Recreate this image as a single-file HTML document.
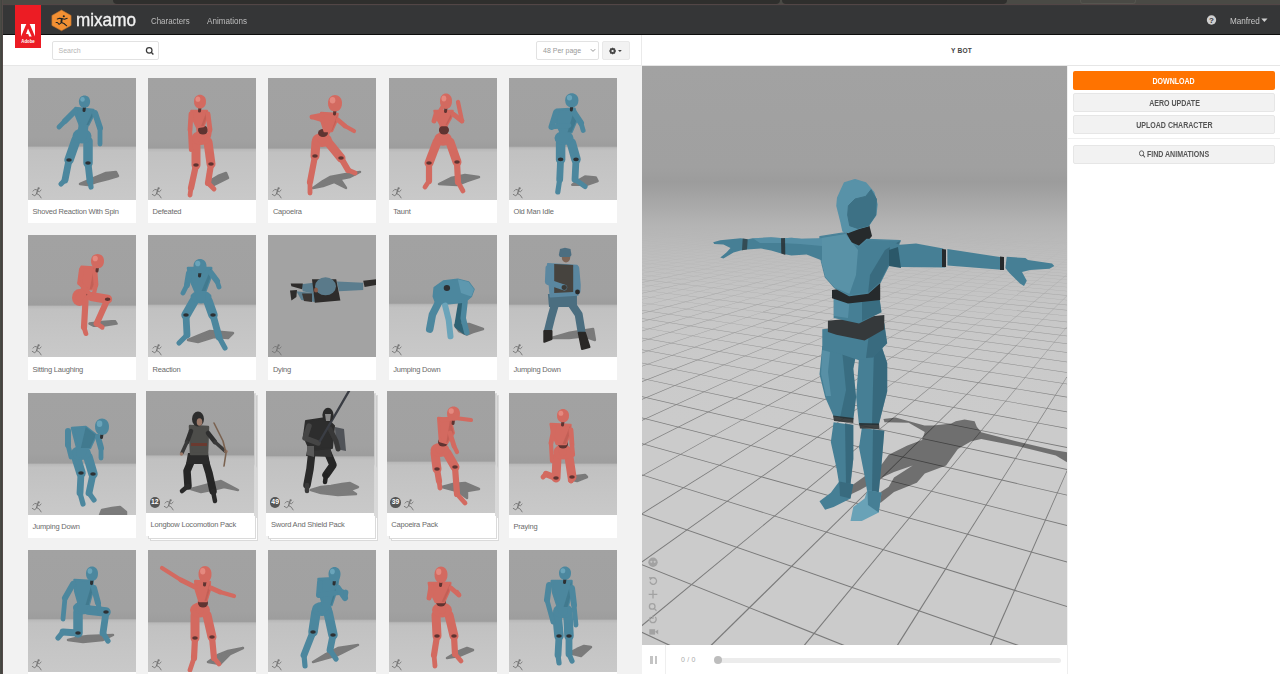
<!DOCTYPE html>
<html><head><meta charset="utf-8">
<style>
*{box-sizing:border-box;margin:0;padding:0}
html,body{width:1280px;height:674px;overflow:hidden;background:#f2f2f2;font-family:"Liberation Sans",sans-serif}
.abs{position:absolute}
#top{left:0;top:0;width:1280px;height:6px;background:linear-gradient(#4a4a45 0,#4a4a45 4px,#524646 4px,#524646 5px,#3a3a3a 5px,#353637 6px)}
#lb{left:0;top:0;width:3px;height:674px;background:linear-gradient(90deg,#4a4a45 0,#4a4a45 1px,#434540 1px,#434540 2px,#534a48 2px,#534a48 3px)}
#nav{left:3px;top:6px;width:1277px;height:29px;background:#353637;border-bottom:1px solid #0d0d0d}
#adobe{left:15px;top:5px;width:26px;height:43px;background:#ec1c24;z-index:5}
#sub{left:3px;top:35px;width:1277px;height:31px;background:#fff;border-bottom:1px solid #e6e6e6}
#grid{left:3px;top:66px;width:639px;height:608px;background:#f2f2f2}
#vdiv{left:641px;top:35px;width:1px;height:31px;background:#eaeaea}
#view{left:642px;top:66px;width:425px;height:579px;background:#c9c9c9;overflow:hidden}
#rp{left:1067px;top:66px;width:213px;height:608px;background:#fff;border-left:1px solid #f0f0f0}
#player{left:642px;top:645px;width:426px;height:29px;background:#fff;border-right:1px solid #eee}
.t{position:absolute;white-space:nowrap;line-height:1}
.card{position:absolute;width:108px;height:145px;background:#fff}
.card .img{position:absolute;left:0;top:0;width:108px;height:122px;background:linear-gradient(#a1a1a1 0,#a1a1a1 64px,#b3b3b3 69px,#c6c6c6 74px,#cbcbcb 122px);overflow:hidden}
.card .cap{position:absolute;left:4.5px;top:9px;font-size:7.5px;letter-spacing:-0.2px;color:#6a6a6a;white-space:nowrap;line-height:1}
.bt{display:inline-block;transform:scaleX(0.86);font-size:8.2px;position:relative;top:0.8px}
.btn{position:absolute;left:1073px;width:202px;height:19px;border-radius:2px;font-size:7px;font-weight:bold;text-align:center;line-height:19px;letter-spacing:0}
</style></head><body>
<div id="top" class="abs"></div>
<div class="abs" style="left:113px;top:0;width:667px;height:4px;background:#2f2f2d;border-radius:0 0 4px 4px"></div>
<div class="abs" style="left:782px;top:0;width:225px;height:4px;background:#2f2f2d;border-radius:0 0 4px 4px"></div>
<div class="abs" style="left:1080px;top:0;width:56px;height:4px;border:1px solid #55554f;border-top:none;border-radius:0 0 3px 3px"></div>
<div id="lb" class="abs"></div>
<div id="nav" class="abs"></div>

<div id="adobe" class="abs"><svg width="26" height="43" viewBox="0 0 26 43" style="position:absolute;left:0;top:0">
<polygon fill="#fff" points="6,19 11.3,19 6,31.5"/>
<polygon fill="#fff" points="14.7,19 20,19 20,31.5"/>
<polygon fill="#fff" points="13,23.4 16.7,31.5 14.2,31.5 13.2,29 11,29"/>
<text x="13" y="42.6" font-family="Liberation Sans" font-size="5" font-weight="bold" fill="#fff" text-anchor="middle" transform="scale(1,0.9)" textLength="13.5" lengthAdjust="spacingAndGlyphs">Adobe</text>
</svg></div>
<svg class="abs" style="left:50px;top:8px" width="24" height="26" viewBox="50 8 24 26">
<polygon points="61.5,10.1 71.1,15.5 71.1,25.4 61.5,30.8 51.9,25.4 51.9,15.5" fill="#f39033" stroke="#b86e2c" stroke-width="0.6"/>
<circle cx="63.8" cy="16.2" r="1.05" fill="#1e2325"/>
<path d="M57.3,19 L59.5,18.3 L61.7,18.4 L64.5,19.2 L67.2,18.3 M61.7,18.4 L61.4,22.6 M56.1,22.5 L57.4,22.5 L59.1,24.3 L61.4,22.6 L64,23.5 L66.7,25.8" stroke="#1e2325" stroke-width="1.05" fill="none" stroke-linecap="round" stroke-linejoin="round"/>
<path d="M61.7,18.4 L61.4,22.6" stroke="#1e2325" stroke-width="1.8"/>
</svg>
<div class="t" style="left:75.5px;top:10.6px;font-size:18.5px;font-weight:normal;color:#f2f2f2;transform:scaleX(0.925);-webkit-text-stroke:0.35px #f2f2f2;transform-origin:0 0">mixamo</div>
<div class="t" style="left:151px;top:16.6px;font-size:9.2px;color:#bdbdbd;transform:scaleX(0.86);transform-origin:0 0">Characters</div>
<div class="t" style="left:207px;top:16.6px;font-size:9.2px;color:#bdbdbd;transform:scaleX(0.88);transform-origin:0 0">Animations</div>
<svg class="abs" style="left:1206px;top:15px" width="11" height="11" viewBox="0 0 11 11"><circle cx="5.5" cy="5" r="4.7" fill="#cfcfcf"/><text x="5.5" y="7.9" font-family="Liberation Sans" font-weight="bold" font-size="8" fill="#353637" text-anchor="middle">?</text></svg>
<div class="t" style="left:1229.7px;top:16.6px;font-size:9.2px;color:#c8c8c8;transform:scaleX(0.885);transform-origin:0 0">Manfred</div>
<svg class="abs" style="left:1261px;top:18px" width="7" height="5" viewBox="0 0 7 5"><polygon points="0.3,0.5 6.5,0.5 3.4,4" fill="#d0d0d0"/></svg>

<div id="sub" class="abs"></div>
<div class="abs" style="left:52px;top:41px;width:107px;height:19px;border:1px solid #e2e2e2;border-radius:2px;background:#fff"></div>
<div class="t" style="left:58.5px;top:47px;font-size:7px;color:#b5b5b5">Search</div>
<svg class="abs" style="left:144px;top:45px" width="11" height="11" viewBox="0 0 11 11"><circle cx="5.2" cy="5.3" r="2.8" fill="none" stroke="#3a3a3a" stroke-width="1.25"/><line x1="7.2" y1="7.3" x2="9.4" y2="9.5" stroke="#3a3a3a" stroke-width="1.4"/></svg>
<div class="abs" style="left:536px;top:41px;width:63px;height:19px;border:1px solid #e2e2e2;border-radius:2px;background:#fff"></div>
<div class="t" style="left:543px;top:47px;font-size:7px;color:#999">48 Per page</div>
<svg class="abs" style="left:590px;top:48px" width="6" height="5" viewBox="0 0 6 5"><polyline points="0.8,1.2 3,3.4 5.2,1.2" fill="none" stroke="#888" stroke-width="0.9"/></svg>
<div class="abs" style="left:602px;top:41px;width:28px;height:19px;border:1px solid #e8e8e8;border-radius:2px;background:#f2f2f2"></div>
<svg class="abs" style="left:609px;top:45px" width="16" height="10" viewBox="0 0 16 10"><g transform="translate(3.6,6)" fill="#444"><circle r="2.25" fill="none" stroke="#444" stroke-width="1.5"/><g><rect x="-0.55" y="-3.3" width="1.1" height="6.6"/><rect x="-0.55" y="-3.3" width="1.1" height="6.6" transform="rotate(45)"/><rect x="-0.55" y="-3.3" width="1.1" height="6.6" transform="rotate(90)"/><rect x="-0.55" y="-3.3" width="1.1" height="6.6" transform="rotate(135)"/></g><circle r="1.1" fill="#f2f2f2"/></g><polygon points="9,5 12.8,5 10.9,7.1" fill="#444"/></svg>
<div class="t" style="left:951px;top:47.5px;font-size:6.6px;font-weight:bold;color:#444;letter-spacing:0.2px">Y BOT</div>

<div id="vdiv" class="abs"></div>
<div id="grid" class="abs"></div>
<svg width="0" height="0" style="position:absolute"><defs><filter id="bl" x="-20%" y="-20%" width="140%" height="140%"><feGaussianBlur stdDeviation="0.7"/></filter></defs></svg>
<div class="card" style="left:28px;top:78px"><div class="img" style="background:linear-gradient(#a2a2a2 0,#a1a1a1 58.5px,#9d9d9d 68.0px,#b9b9b9 69.5px,#c1c1c1 72.5px,#c9c9c9 122px)"><svg width="108" height="122" viewBox="0 0 108 122" style="position:absolute;left:0;top:0"><polygon points="52,106 66,100 78,95 88,94 90,98 80,101 68,104 60,107" fill="#6e6e6e" stroke="#6e6e6e" stroke-width="2.5" stroke-linejoin="round" opacity="0.85" filter="url(#bl)"/><polyline points="48,62 41,82" fill="none" stroke="#4c879e" stroke-width="9.5" stroke-linecap="round" stroke-linejoin="round"/><polyline points="41,82 37,102" fill="none" stroke="#4c879e" stroke-width="6.8" stroke-linecap="round" stroke-linejoin="round"/><polyline points="37,102 33,106" fill="none" stroke="#4c879e" stroke-width="5.2" stroke-linecap="round" stroke-linejoin="round"/><ellipse cx="41" cy="82" rx="2.8" ry="1.8" fill="#2d3033"/><polyline points="60,63 60,85" fill="none" stroke="#4c879e" stroke-width="9.5" stroke-linecap="round" stroke-linejoin="round"/><polyline points="60,85 62,103" fill="none" stroke="#4c879e" stroke-width="6.8" stroke-linecap="round" stroke-linejoin="round"/><polyline points="62,103 63,109" fill="none" stroke="#4c879e" stroke-width="5.2" stroke-linecap="round" stroke-linejoin="round"/><ellipse cx="60" cy="85" rx="2.8" ry="1.8" fill="#2d3033"/><ellipse cx="54" cy="58" rx="9.5" ry="7.5" fill="#4c879e"/><polyline points="56.25,43 54,58" fill="none" stroke="#4c879e" stroke-width="10" stroke-linecap="round" stroke-linejoin="round"/><polygon points="47.435,30 65.495,32 64.447,38.75 60.3135,47.0 51.8855,47.0 48.096000000000004,37.65" fill="#4c879e" stroke="#4c879e" stroke-width="2.5" stroke-linejoin="round"/><polygon points="65.495,32 64.447,38.75 60.3135,47.0 58.465,47.0" fill="#2f6274" opacity="0.35"/><polyline points="47,33 37,43" fill="none" stroke="#4c879e" stroke-width="6" stroke-linecap="round" stroke-linejoin="round"/><polyline points="37,43 31,49" fill="none" stroke="#4c879e" stroke-width="4.8" stroke-linecap="round" stroke-linejoin="round"/><polyline points="67,35 72,50" fill="none" stroke="#4c879e" stroke-width="6" stroke-linecap="round" stroke-linejoin="round"/><polyline points="72,50 72,66" fill="none" stroke="#4c879e" stroke-width="4.8" stroke-linecap="round" stroke-linejoin="round"/><polyline points="56.5,28.5 56.0,32.5" fill="none" stroke="#2d3033" stroke-width="3" stroke-linecap="round" stroke-linejoin="round"/><path d="M50.9,23.5 C50.9,15.399999999999999 62.1,15.399999999999999 62.1,23.5 C62.1,28.9 58.46,29.8 56.5,29.8 C54.54,29.8 50.9,28.9 50.9,23.5 Z" fill="#4c879e"/><ellipse cx="54.54" cy="21.4" rx="2.2399999999999998" ry="2.4000000000000004" fill="#6aa4ba"/></svg><svg class="run" width="14" height="14" viewBox="0 0 14 14" style="position:absolute;left:3.5px;top:107.5px;overflow:visible"><g fill="none" stroke="#747474" stroke-width="0.9" stroke-linecap="round" stroke-linejoin="round"><circle cx="6.6" cy="2.3" r="1.15" fill="#747474" stroke="none"/><path d="M5.8,3.6 L4.6,7.6" stroke-width="1.3"/><path d="M5.3,4.1 L2.8,3.4 L1.1,5.1"/><path d="M6.1,5.1 L7.3,5.8 L9.1,4.1"/><path d="M4.6,7.6 L2.8,9.9 L0.3,8.4"/><path d="M4.6,7.6 L7.3,9.1 L9.1,11.9"/></g></svg></div><div class="cap" style="top:130.2px">Shoved Reaction With Spin</div></div>
<div class="card" style="left:148px;top:78px"><div class="img" style="background:linear-gradient(#a2a2a2 0,#a1a1a1 60.5px,#9d9d9d 70.0px,#b9b9b9 71.5px,#c1c1c1 74.5px,#c9c9c9 122px)"><svg width="108" height="122" viewBox="0 0 108 122" style="position:absolute;left:0;top:0"><polygon points="60,104 70,98 78,95 80,100 72,104 64,108" fill="#6e6e6e" stroke="#6e6e6e" stroke-width="2.5" stroke-linejoin="round" opacity="0.85" filter="url(#bl)"/><polyline points="48,64 48,87" fill="none" stroke="#d36a60" stroke-width="9" stroke-linecap="round" stroke-linejoin="round"/><polyline points="48,87 43,110" fill="none" stroke="#d36a60" stroke-width="6.2" stroke-linecap="round" stroke-linejoin="round"/><polyline points="43,110 42,117" fill="none" stroke="#d36a60" stroke-width="4.8" stroke-linecap="round" stroke-linejoin="round"/><ellipse cx="48" cy="87" rx="2.8" ry="1.8" fill="#5f3431"/><polyline points="60,64 63,86" fill="none" stroke="#d36a60" stroke-width="9" stroke-linecap="round" stroke-linejoin="round"/><polyline points="63,86 60,105" fill="none" stroke="#d36a60" stroke-width="6.2" stroke-linecap="round" stroke-linejoin="round"/><polyline points="60,105 66,111" fill="none" stroke="#d36a60" stroke-width="4.8" stroke-linecap="round" stroke-linejoin="round"/><ellipse cx="63" cy="86" rx="2.8" ry="1.8" fill="#5f3431"/><ellipse cx="53" cy="60" rx="9.5" ry="7" fill="#d36a60"/><polyline points="51.75,45 53,60" fill="none" stroke="#d36a60" stroke-width="8" stroke-linecap="round" stroke-linejoin="round"/><ellipse cx="55" cy="52" rx="5" ry="4.5" fill="#5f3431"/><polygon points="43.365,33 58.845,33 58.571,39.75 55.5125,48.0 48.8905,49.0 44.8,40.2" fill="#d36a60" stroke="#d36a60" stroke-width="2.5" stroke-linejoin="round"/><polygon points="58.845,33 58.571,39.75 55.5125,48.0 53.105000000000004,48.0" fill="#a54c44" opacity="0.35"/><polyline points="43,36 42,52" fill="none" stroke="#d36a60" stroke-width="4.8" stroke-linecap="round" stroke-linejoin="round"/><polyline points="42,52 43,72" fill="none" stroke="#d36a60" stroke-width="4.2" stroke-linecap="round" stroke-linejoin="round"/><polyline points="60,36 62,52" fill="none" stroke="#d36a60" stroke-width="4.8" stroke-linecap="round" stroke-linejoin="round"/><polyline points="62,52 61,58" fill="none" stroke="#d36a60" stroke-width="4.2" stroke-linecap="round" stroke-linejoin="round"/><polyline points="52,29.1 51.5,33.1" fill="none" stroke="#5f3431" stroke-width="3" stroke-linecap="round" stroke-linejoin="round"/><path d="M46,23.5 C46,14.59 58,14.59 58,23.5 C58,29.439999999999998 54.1,30.43 52,30.43 C49.9,30.43 46,29.439999999999998 46,23.5 Z" fill="#d36a60"/><ellipse cx="49.9" cy="21.19" rx="2.4000000000000004" ry="2.64" fill="#e4897f"/></svg><svg class="run" width="14" height="14" viewBox="0 0 14 14" style="position:absolute;left:3.5px;top:107.5px;overflow:visible"><g fill="none" stroke="#747474" stroke-width="0.9" stroke-linecap="round" stroke-linejoin="round"><circle cx="6.6" cy="2.3" r="1.15" fill="#747474" stroke="none"/><path d="M5.8,3.6 L4.6,7.6" stroke-width="1.3"/><path d="M5.3,4.1 L2.8,3.4 L1.1,5.1"/><path d="M6.1,5.1 L7.3,5.8 L9.1,4.1"/><path d="M4.6,7.6 L2.8,9.9 L0.3,8.4"/><path d="M4.6,7.6 L7.3,9.1 L9.1,11.9"/></g></svg></div><div class="cap" style="top:130.2px">Defeated</div></div>
<div class="card" style="left:268.4px;top:78px"><div class="img" style="background:linear-gradient(#a2a2a2 0,#a1a1a1 60.5px,#9d9d9d 70.0px,#b9b9b9 71.5px,#c1c1c1 74.5px,#c9c9c9 122px)"><svg width="108" height="122" viewBox="0 0 108 122" style="position:absolute;left:0;top:0"><polygon points="45,110 55,103 62,99 78,96 92,94 82,99 72,101 78,110 66,104 55,108" fill="#6e6e6e" stroke="#6e6e6e" stroke-width="2.5" stroke-linejoin="round" opacity="0.85" filter="url(#bl)"/><polyline points="48,64 47,78" fill="none" stroke="#d36a60" stroke-width="9" stroke-linecap="round" stroke-linejoin="round"/><polyline points="47,78 42,104" fill="none" stroke="#d36a60" stroke-width="6.2" stroke-linecap="round" stroke-linejoin="round"/><polyline points="42,104 42,115" fill="none" stroke="#d36a60" stroke-width="4.8" stroke-linecap="round" stroke-linejoin="round"/><ellipse cx="47" cy="78" rx="2.8" ry="1.8" fill="#5f3431"/><polyline points="60,64 73,80" fill="none" stroke="#d36a60" stroke-width="9" stroke-linecap="round" stroke-linejoin="round"/><polyline points="73,80 80,92" fill="none" stroke="#d36a60" stroke-width="6.2" stroke-linecap="round" stroke-linejoin="round"/><polyline points="80,92 87,95" fill="none" stroke="#d36a60" stroke-width="4.8" stroke-linecap="round" stroke-linejoin="round"/><ellipse cx="73" cy="80" rx="2.8" ry="1.8" fill="#5f3431"/><ellipse cx="54" cy="62" rx="10" ry="7" fill="#d36a60"/><polyline points="60.75,49 54,62" fill="none" stroke="#d36a60" stroke-width="8" stroke-linecap="round" stroke-linejoin="round"/><ellipse cx="55" cy="55" rx="5" ry="4" fill="#5f3431"/><polygon points="53.225,35 69.565,36 68.13,43.65 63.9105,53.0 56.6865,53.0 53.499,43.1" fill="#d36a60" stroke="#d36a60" stroke-width="2.5" stroke-linejoin="round"/><polygon points="69.565,36 68.13,43.65 63.9105,53.0 63.394999999999996,53.0" fill="#a54c44" opacity="0.35"/><polyline points="54,37 44,39" fill="none" stroke="#d36a60" stroke-width="4.8" stroke-linecap="round" stroke-linejoin="round"/><polyline points="44,39 64,45" fill="none" stroke="#d36a60" stroke-width="4.2" stroke-linecap="round" stroke-linejoin="round"/><polyline points="70,42 77,48" fill="none" stroke="#d36a60" stroke-width="4.8" stroke-linecap="round" stroke-linejoin="round"/><polyline points="77,48 86,53" fill="none" stroke="#d36a60" stroke-width="4.2" stroke-linecap="round" stroke-linejoin="round"/><polyline points="67,32 66.5,36" fill="none" stroke="#5f3431" stroke-width="3" stroke-linecap="round" stroke-linejoin="round"/><path d="M60,25 C60,14.2 74,14.2 74,25 C74,32.2 69.45,33.4 67,33.4 C64.55,33.4 60,32.2 60,25 Z" fill="#d36a60"/><ellipse cx="64.55" cy="22.2" rx="2.8000000000000003" ry="3.2" fill="#e4897f"/></svg><svg class="run" width="14" height="14" viewBox="0 0 14 14" style="position:absolute;left:3.5px;top:107.5px;overflow:visible"><g fill="none" stroke="#747474" stroke-width="0.9" stroke-linecap="round" stroke-linejoin="round"><circle cx="6.6" cy="2.3" r="1.15" fill="#747474" stroke="none"/><path d="M5.8,3.6 L4.6,7.6" stroke-width="1.3"/><path d="M5.3,4.1 L2.8,3.4 L1.1,5.1"/><path d="M6.1,5.1 L7.3,5.8 L9.1,4.1"/><path d="M4.6,7.6 L2.8,9.9 L0.3,8.4"/><path d="M4.6,7.6 L7.3,9.1 L9.1,11.9"/></g></svg></div><div class="cap" style="top:130.2px">Capoeira</div></div>
<div class="card" style="left:388.75px;top:78px"><div class="img" style="background:linear-gradient(#a2a2a2 0,#a1a1a1 60.5px,#9d9d9d 70.0px,#b9b9b9 71.5px,#c1c1c1 74.5px,#c9c9c9 122px)"><svg width="108" height="122" viewBox="0 0 108 122" style="position:absolute;left:0;top:0"><polygon points="50,106 62,100 76,97 90,99 78,103 68,107" fill="#6e6e6e" stroke="#6e6e6e" stroke-width="2.5" stroke-linejoin="round" opacity="0.85" filter="url(#bl)"/><polyline points="48,64 40,85" fill="none" stroke="#d36a60" stroke-width="9" stroke-linecap="round" stroke-linejoin="round"/><polyline points="40,85 40,103" fill="none" stroke="#d36a60" stroke-width="6.2" stroke-linecap="round" stroke-linejoin="round"/><polyline points="40,103 36,109" fill="none" stroke="#d36a60" stroke-width="4.8" stroke-linecap="round" stroke-linejoin="round"/><ellipse cx="40" cy="85" rx="2.8" ry="1.8" fill="#5f3431"/><polyline points="61,64 68,84" fill="none" stroke="#d36a60" stroke-width="9" stroke-linecap="round" stroke-linejoin="round"/><polyline points="68,84 69,104" fill="none" stroke="#d36a60" stroke-width="6.2" stroke-linecap="round" stroke-linejoin="round"/><polyline points="69,104 74,113" fill="none" stroke="#d36a60" stroke-width="4.8" stroke-linecap="round" stroke-linejoin="round"/><ellipse cx="68" cy="84" rx="2.8" ry="1.8" fill="#5f3431"/><ellipse cx="54" cy="61" rx="9" ry="6.8" fill="#d36a60"/><polyline points="54.75,43 54,61" fill="none" stroke="#d36a60" stroke-width="8" stroke-linecap="round" stroke-linejoin="round"/><ellipse cx="55" cy="52" rx="5" ry="4.5" fill="#5f3431"/><polygon points="45.505,33 63.565,33 62.129999999999995,39.3 57.9105,47.0 51.890499999999996,47.0 47.327,39.3" fill="#d36a60" stroke="#d36a60" stroke-width="2.5" stroke-linejoin="round"/><polygon points="63.565,33 62.129999999999995,39.3 57.9105,47.0 56.535,47.0" fill="#a54c44" opacity="0.35"/><polyline points="47,36 45,43" fill="none" stroke="#d36a60" stroke-width="4.8" stroke-linecap="round" stroke-linejoin="round"/><polyline points="45,43 54,28" fill="none" stroke="#d36a60" stroke-width="4.2" stroke-linecap="round" stroke-linejoin="round"/><polyline points="64,36 73,43" fill="none" stroke="#d36a60" stroke-width="4.8" stroke-linecap="round" stroke-linejoin="round"/><polyline points="73,43 69,24" fill="none" stroke="#d36a60" stroke-width="4.2" stroke-linecap="round" stroke-linejoin="round"/><polyline points="57,29.5 56.5,33.5" fill="none" stroke="#5f3431" stroke-width="3" stroke-linecap="round" stroke-linejoin="round"/><path d="M51,23 C51,12.875 63,12.875 63,23 C63,29.75 59.1,30.875 57,30.875 C54.9,30.875 51,29.75 51,23 Z" fill="#d36a60"/><ellipse cx="54.9" cy="20.375" rx="2.4000000000000004" ry="3.0" fill="#e4897f"/></svg><svg class="run" width="14" height="14" viewBox="0 0 14 14" style="position:absolute;left:3.5px;top:107.5px;overflow:visible"><g fill="none" stroke="#747474" stroke-width="0.9" stroke-linecap="round" stroke-linejoin="round"><circle cx="6.6" cy="2.3" r="1.15" fill="#747474" stroke="none"/><path d="M5.8,3.6 L4.6,7.6" stroke-width="1.3"/><path d="M5.3,4.1 L2.8,3.4 L1.1,5.1"/><path d="M6.1,5.1 L7.3,5.8 L9.1,4.1"/><path d="M4.6,7.6 L2.8,9.9 L0.3,8.4"/><path d="M4.6,7.6 L7.3,9.1 L9.1,11.9"/></g></svg></div><div class="cap" style="top:130.2px">Taunt</div></div>
<div class="card" style="left:509px;top:78px"><div class="img" style="background:linear-gradient(#a2a2a2 0,#a1a1a1 58.7px,#9d9d9d 68.2px,#b9b9b9 69.7px,#c1c1c1 72.7px,#c9c9c9 122px)"><svg width="108" height="122" viewBox="0 0 108 122" style="position:absolute;left:0;top:0"><polygon points="63.3,106.7 70,102 76,98.6 86.8,99.5 88.6,103 77.8,106.7" fill="#6e6e6e" stroke="#6e6e6e" stroke-width="2.5" stroke-linejoin="round" opacity="0.85" filter="url(#bl)"/><polyline points="51.6,65 51.6,81.4" fill="none" stroke="#4c879e" stroke-width="9.5" stroke-linecap="round" stroke-linejoin="round"/><polyline points="51.6,81.4 50.7,101.3" fill="none" stroke="#4c879e" stroke-width="6.8" stroke-linecap="round" stroke-linejoin="round"/><polyline points="50.7,101.3 48.8,114" fill="none" stroke="#4c879e" stroke-width="5.2" stroke-linecap="round" stroke-linejoin="round"/><ellipse cx="51.6" cy="81.4" rx="2.8" ry="1.8" fill="#2d3033"/><polyline points="62.4,65 67,81.4" fill="none" stroke="#4c879e" stroke-width="9.5" stroke-linecap="round" stroke-linejoin="round"/><polyline points="67,81.4 66,101.3" fill="none" stroke="#4c879e" stroke-width="6.8" stroke-linecap="round" stroke-linejoin="round"/><polyline points="66,101.3 76,108.5" fill="none" stroke="#4c879e" stroke-width="5.2" stroke-linecap="round" stroke-linejoin="round"/><ellipse cx="67" cy="81.4" rx="2.8" ry="1.8" fill="#2d3033"/><ellipse cx="55" cy="60" rx="9.5" ry="7" fill="#4c879e"/><polyline points="56.96666666666667,50.3 55,60" fill="none" stroke="#4c879e" stroke-width="10" stroke-linecap="round" stroke-linejoin="round"/><polygon points="47.535333333333334,31.7 65.59533333333333,30.8 67.83133333333333,41.6 62.413333333333334,54.3 51.577333333333335,54.3 46.84733333333334,43.4" fill="#4c879e" stroke="#4c879e" stroke-width="2.5" stroke-linejoin="round"/><polygon points="65.59533333333333,30.8 67.83133333333333,41.6 62.413333333333334,54.3 58.56533333333333,54.3" fill="#2f6274" opacity="0.35"/><polyline points="47,34.4 42.5,48.8" fill="none" stroke="#4c879e" stroke-width="6" stroke-linecap="round" stroke-linejoin="round"/><polyline points="42.5,48.8 60,47.5" fill="none" stroke="#4c879e" stroke-width="4.8" stroke-linecap="round" stroke-linejoin="round"/><polyline points="65,34.4 72,45" fill="none" stroke="#4c879e" stroke-width="6" stroke-linecap="round" stroke-linejoin="round"/><polyline points="72,45 74.2,52.5" fill="none" stroke="#4c879e" stroke-width="4.8" stroke-linecap="round" stroke-linejoin="round"/><polyline points="62.8,28.0 62.3,32.0" fill="none" stroke="#2d3033" stroke-width="3" stroke-linecap="round" stroke-linejoin="round"/><path d="M56.199999999999996,22.2 C56.199999999999996,13.02 69.39999999999999,13.02 69.39999999999999,22.2 C69.39999999999999,28.32 65.11,29.34 62.8,29.34 C60.489999999999995,29.34 56.199999999999996,28.32 56.199999999999996,22.2 Z" fill="#4c879e"/><ellipse cx="60.489999999999995" cy="19.82" rx="2.64" ry="2.72" fill="#6aa4ba"/></svg><svg class="run" width="14" height="14" viewBox="0 0 14 14" style="position:absolute;left:3.5px;top:107.5px;overflow:visible"><g fill="none" stroke="#747474" stroke-width="0.9" stroke-linecap="round" stroke-linejoin="round"><circle cx="6.6" cy="2.3" r="1.15" fill="#747474" stroke="none"/><path d="M5.8,3.6 L4.6,7.6" stroke-width="1.3"/><path d="M5.3,4.1 L2.8,3.4 L1.1,5.1"/><path d="M6.1,5.1 L7.3,5.8 L9.1,4.1"/><path d="M4.6,7.6 L2.8,9.9 L0.3,8.4"/><path d="M4.6,7.6 L7.3,9.1 L9.1,11.9"/></g></svg></div><div class="cap" style="top:130.2px">Old Man Idle</div></div>
<div class="card" style="left:28px;top:235.4px"><div class="img" style="background:linear-gradient(#a2a2a2 0,#a1a1a1 60.5px,#9d9d9d 70.0px,#b9b9b9 71.5px,#c1c1c1 74.5px,#c9c9c9 122px)"><svg width="108" height="122" viewBox="0 0 108 122" style="position:absolute;left:0;top:0"><polygon points="61.5,88.6 74,87 86.8,86 88.6,88.6 76,90.4 66,91" fill="#6e6e6e" stroke="#6e6e6e" stroke-width="2.5" stroke-linejoin="round" opacity="0.85" filter="url(#bl)"/><polyline points="52.5,59.7 57.9,58.8" fill="none" stroke="#d36a60" stroke-width="9" stroke-linecap="round" stroke-linejoin="round"/><polyline points="57.9,58.8 56,92.3" fill="none" stroke="#d36a60" stroke-width="6.2" stroke-linecap="round" stroke-linejoin="round"/><polyline points="56,92.3 57.9,98.6" fill="none" stroke="#d36a60" stroke-width="4.8" stroke-linecap="round" stroke-linejoin="round"/><ellipse cx="57.9" cy="58.8" rx="2.8" ry="1.8" fill="#5f3431"/><polyline points="63.3,61.5 79.6,64.2" fill="none" stroke="#d36a60" stroke-width="9" stroke-linecap="round" stroke-linejoin="round"/><polyline points="79.6,64.2 68.7,88.6" fill="none" stroke="#d36a60" stroke-width="6.2" stroke-linecap="round" stroke-linejoin="round"/><polyline points="68.7,88.6 74.2,92.3" fill="none" stroke="#d36a60" stroke-width="4.8" stroke-linecap="round" stroke-linejoin="round"/><ellipse cx="79.6" cy="64.2" rx="2.8" ry="1.8" fill="#5f3431"/><ellipse cx="51.5" cy="62.4" rx="7.5" ry="8.5" fill="#d36a60"/><polyline points="59.71666666666667,50.3 51.5,62.4" fill="none" stroke="#d36a60" stroke-width="8" stroke-linecap="round" stroke-linejoin="round"/><polygon points="53.510333333333335,31.7 65.98033333333333,32.6 68.21633333333332,45.2 63.57233333333333,54.3 55.05833333333333,53.4 51.96233333333333,41.6" fill="#d36a60" stroke="#d36a60" stroke-width="2.5" stroke-linejoin="round"/><polygon points="65.98033333333333,32.6 68.21633333333332,45.2 63.57233333333333,54.3 61.745333333333335,54.3" fill="#a54c44" opacity="0.35"/><polyline points="53.4,34.4 51.6,48" fill="none" stroke="#d36a60" stroke-width="4.8" stroke-linecap="round" stroke-linejoin="round"/><polyline points="51.6,48 62.4,59.7" fill="none" stroke="#d36a60" stroke-width="4.2" stroke-linecap="round" stroke-linejoin="round"/><polyline points="67,36 68,50" fill="none" stroke="#d36a60" stroke-width="4.8" stroke-linecap="round" stroke-linejoin="round"/><polyline points="68,50 66,58" fill="none" stroke="#d36a60" stroke-width="4.2" stroke-linecap="round" stroke-linejoin="round"/><polyline points="69.5,32 69.0,36" fill="none" stroke="#5f3431" stroke-width="3" stroke-linecap="round" stroke-linejoin="round"/><path d="M63.0,26 C63.0,16.549999999999997 76.0,16.549999999999997 76.0,26 C76.0,32.3 71.775,33.35 69.5,33.35 C67.225,33.35 63.0,32.3 63.0,26 Z" fill="#d36a60"/><ellipse cx="67.225" cy="23.55" rx="2.6" ry="2.8000000000000003" fill="#e4897f"/></svg><svg class="run" width="14" height="14" viewBox="0 0 14 14" style="position:absolute;left:3.5px;top:107.5px;overflow:visible"><g fill="none" stroke="#747474" stroke-width="0.9" stroke-linecap="round" stroke-linejoin="round"><circle cx="6.6" cy="2.3" r="1.15" fill="#747474" stroke="none"/><path d="M5.8,3.6 L4.6,7.6" stroke-width="1.3"/><path d="M5.3,4.1 L2.8,3.4 L1.1,5.1"/><path d="M6.1,5.1 L7.3,5.8 L9.1,4.1"/><path d="M4.6,7.6 L2.8,9.9 L0.3,8.4"/><path d="M4.6,7.6 L7.3,9.1 L9.1,11.9"/></g></svg></div><div class="cap" style="top:130.2px">Sitting Laughing</div></div>
<div class="card" style="left:148px;top:235.4px"><div class="img" style="background:linear-gradient(#a2a2a2 0,#a1a1a1 59.599999999999994px,#9d9d9d 69.1px,#b9b9b9 70.6px,#c1c1c1 73.6px,#c9c9c9 122px)"><svg width="108" height="122" viewBox="0 0 108 122" style="position:absolute;left:0;top:0"><polygon points="40,105 52,100 62,96 85,98 80,103 66,102 50,107" fill="#6e6e6e" stroke="#6e6e6e" stroke-width="2.5" stroke-linejoin="round" opacity="0.85" filter="url(#bl)"/><polyline points="46,66 38,80" fill="none" stroke="#4c879e" stroke-width="9.5" stroke-linecap="round" stroke-linejoin="round"/><polyline points="38,80 39,100" fill="none" stroke="#4c879e" stroke-width="6.8" stroke-linecap="round" stroke-linejoin="round"/><polyline points="39,100 31,108" fill="none" stroke="#4c879e" stroke-width="5.2" stroke-linecap="round" stroke-linejoin="round"/><ellipse cx="38" cy="80" rx="2.8" ry="1.8" fill="#2d3033"/><polyline points="60,66 65,80" fill="none" stroke="#4c879e" stroke-width="9.5" stroke-linecap="round" stroke-linejoin="round"/><polyline points="65,80 71,102" fill="none" stroke="#4c879e" stroke-width="6.8" stroke-linecap="round" stroke-linejoin="round"/><polyline points="71,102 77,113" fill="none" stroke="#4c879e" stroke-width="5.2" stroke-linecap="round" stroke-linejoin="round"/><ellipse cx="65" cy="80" rx="2.8" ry="1.8" fill="#2d3033"/><ellipse cx="53" cy="62" rx="10.5" ry="6.5" fill="#4c879e"/><polyline points="52.0,52 53,62" fill="none" stroke="#4c879e" stroke-width="10" stroke-linecap="round" stroke-linejoin="round"/><polygon points="39.96,33 63.18,33 62.132,43.35 57.418,56.0 47.184,56.0 41.782,43.35" fill="#4c879e" stroke="#4c879e" stroke-width="2.5" stroke-linejoin="round"/><polygon points="63.18,33 62.132,43.35 57.418,56.0 53.57,56.0" fill="#2f6274" opacity="0.35"/><polyline points="41,38 39,50" fill="none" stroke="#4c879e" stroke-width="6" stroke-linecap="round" stroke-linejoin="round"/><polyline points="39,50 35,58" fill="none" stroke="#4c879e" stroke-width="4.8" stroke-linecap="round" stroke-linejoin="round"/><polyline points="63,38 69,46" fill="none" stroke="#4c879e" stroke-width="6" stroke-linecap="round" stroke-linejoin="round"/><polyline points="69,46 71,52" fill="none" stroke="#4c879e" stroke-width="4.8" stroke-linecap="round" stroke-linejoin="round"/><polyline points="52,37 51.5,41" fill="none" stroke="#2d3033" stroke-width="3" stroke-linecap="round" stroke-linejoin="round"/><path d="M45.5,31 C45.5,21.549999999999997 58.5,21.549999999999997 58.5,31 C58.5,37.3 54.275,38.35 52,38.35 C49.725,38.35 45.5,37.3 45.5,31 Z" fill="#4c879e"/><ellipse cx="49.725" cy="28.55" rx="2.6" ry="2.8000000000000003" fill="#6aa4ba"/></svg><svg class="run" width="14" height="14" viewBox="0 0 14 14" style="position:absolute;left:3.5px;top:107.5px;overflow:visible"><g fill="none" stroke="#747474" stroke-width="0.9" stroke-linecap="round" stroke-linejoin="round"><circle cx="6.6" cy="2.3" r="1.15" fill="#747474" stroke="none"/><path d="M5.8,3.6 L4.6,7.6" stroke-width="1.3"/><path d="M5.3,4.1 L2.8,3.4 L1.1,5.1"/><path d="M6.1,5.1 L7.3,5.8 L9.1,4.1"/><path d="M4.6,7.6 L2.8,9.9 L0.3,8.4"/><path d="M4.6,7.6 L7.3,9.1 L9.1,11.9"/></g></svg></div><div class="cap" style="top:130.2px">Reaction</div></div>
<div class="card" style="left:268.4px;top:235.4px"><div class="img" style="background:#a3a3a3"><svg width="108" height="122" viewBox="0 0 108 122" style="position:absolute;left:0;top:0"><polygon points="28.4,56.3 46.8,58.2 46.8,67 33.3,64.9" fill="#5b7d8e"/><polygon points="22,55.6 29,54.9 28.4,62 23.4,65.6" fill="#2e2c2b"/><polygon points="33.3,49.2 45.4,47.8 45.4,58.5 34.8,56.3" fill="#5b7d8e"/><polygon points="22.7,48.5 34.8,48.5 34,54.2 23.4,51.3" fill="#2e2c2b"/><polygon points="68.9,46.4 95.2,47.8 95.2,55 71,56.3" fill="#5b7d8e"/><polygon points="95.2,45.7 108,44.2 108,50 96.6,52" fill="#2e2c2b"/><polygon points="44,44.2 68.2,44.2 72.4,65.6 46.8,67.7" fill="#2e2c2b"/><polygon points="34,58.5 44,58.5 44,67 36,66" fill="#3a3634"/><ellipse cx="57.5" cy="51.3" rx="10.5" ry="9" fill="#5a7a8a"/><ellipse cx="48" cy="55" rx="2" ry="2.5" fill="#8a5a48"/></svg><svg class="run" width="14" height="14" viewBox="0 0 14 14" style="position:absolute;left:3.5px;top:107.5px;overflow:visible"><g fill="none" stroke="#747474" stroke-width="0.9" stroke-linecap="round" stroke-linejoin="round"><circle cx="6.6" cy="2.3" r="1.15" fill="#747474" stroke="none"/><path d="M5.8,3.6 L4.6,7.6" stroke-width="1.3"/><path d="M5.3,4.1 L2.8,3.4 L1.1,5.1"/><path d="M6.1,5.1 L7.3,5.8 L9.1,4.1"/><path d="M4.6,7.6 L2.8,9.9 L0.3,8.4"/><path d="M4.6,7.6 L7.3,9.1 L9.1,11.9"/></g></svg></div><div class="cap" style="top:130.2px">Dying</div></div>
<div class="card" style="left:388.75px;top:235.4px"><div class="img" style="background:linear-gradient(#a2a2a2 0,#a1a1a1 58.7px,#9d9d9d 68.2px,#b9b9b9 69.7px,#c1c1c1 72.7px,#c9c9c9 122px)"><svg width="108" height="122" viewBox="0 0 108 122" style="position:absolute;left:0;top:0"><polygon points="66,90 80,89 94,94 84,97 77.8,99.5 70,96" fill="#6e6e6e" stroke="#6e6e6e" stroke-width="2.5" stroke-linejoin="round" opacity="0.85" filter="url(#bl)"/><polyline points="48.9,68.8 43.4,79.6 40.7,94.1" fill="none" stroke="#4c879e" stroke-width="7.5" stroke-linecap="round" stroke-linejoin="round"/><polyline points="72.4,68.8 70.6,79.6 68.8,90.5 76,96" fill="none" stroke="#2f6274" stroke-width="7" stroke-linecap="round" stroke-linejoin="round"/><polyline points="76,67 74.2,83.2 77.8,97.7" fill="none" stroke="#4c879e" stroke-width="5.5" stroke-linecap="round" stroke-linejoin="round"/><polygon points="45.2,52.5 54.3,46.1 68.8,44.3 79.6,47 85,54.3 82.3,61.5 76,67 59.7,68.8 47,68.8 44.3,61.5" fill="#4c879e" stroke="#4c879e" stroke-width="1.5" stroke-linejoin="round"/><polygon points="68.8,44.3 79.6,47 85,54.3 82.3,61.5 72,58" fill="#6aa4ba" opacity="0.6"/><polyline points="56.1,70.6 59.7,85 61.5,101.3" fill="none" stroke="#6aa4ba" stroke-width="6" stroke-linecap="round" stroke-linejoin="round"/><ellipse cx="57.9" cy="53" rx="3.2" ry="3" fill="#2d3033"/></svg><svg class="run" width="14" height="14" viewBox="0 0 14 14" style="position:absolute;left:3.5px;top:107.5px;overflow:visible"><g fill="none" stroke="#747474" stroke-width="0.9" stroke-linecap="round" stroke-linejoin="round"><circle cx="6.6" cy="2.3" r="1.15" fill="#747474" stroke="none"/><path d="M5.8,3.6 L4.6,7.6" stroke-width="1.3"/><path d="M5.3,4.1 L2.8,3.4 L1.1,5.1"/><path d="M6.1,5.1 L7.3,5.8 L9.1,4.1"/><path d="M4.6,7.6 L2.8,9.9 L0.3,8.4"/><path d="M4.6,7.6 L7.3,9.1 L9.1,11.9"/></g></svg></div><div class="cap" style="top:130.2px">Jumping Down</div></div>
<div class="card" style="left:509px;top:235.4px"><div class="img" style="background:linear-gradient(#a2a2a2 0,#a1a1a1 59.599999999999994px,#9d9d9d 69.1px,#b9b9b9 70.6px,#c1c1c1 73.6px,#c9c9c9 122px)"><svg width="108" height="122" viewBox="0 0 108 122" style="position:absolute;left:0;top:0"><polygon points="42.5,103 60.6,97.7 84.1,94.1 85.9,105 75.1,101.3 60,103" fill="#6e6e6e" stroke="#6e6e6e" stroke-width="2.5" stroke-linejoin="round" opacity="0.85" filter="url(#bl)"/><polyline points="46.1,68.8 42.5,81.4 38.9,95.9" fill="none" stroke="#4b6e80" stroke-width="8" stroke-linecap="round" stroke-linejoin="round"/><polygon points="35.3,96 42.5,96 42.5,104 35.3,106.8" fill="#2a2826" stroke="#2a2826" stroke-width="2" stroke-linejoin="round"/><polyline points="62.4,68.8 69.7,79.6 72.4,95.9" fill="none" stroke="#4b6e80" stroke-width="8" stroke-linecap="round" stroke-linejoin="round"/><polygon points="69.7,97.7 76,97.7 80.5,112 73,114" fill="#2a2826" stroke="#2a2826" stroke-width="2" stroke-linejoin="round"/><polygon points="38.9,59 67.9,59 68,72 40,72" fill="#4b6e80"/><polygon points="38.9,29 67.9,30.8 68.8,59.7 41.6,61.5" fill="#5a87a0" stroke="#5a87a0" stroke-width="2" stroke-linejoin="round"/><polygon points="45.2,29 64.2,30 64.2,57 45.2,58" fill="#46433e"/><polyline points="39.5,33 38.9,47 55.2,52.5" fill="none" stroke="#5a87a0" stroke-width="6" stroke-linecap="round" stroke-linejoin="round"/><polyline points="67.5,33 69,50 68.8,56" fill="none" stroke="#5a87a0" stroke-width="5.5" stroke-linecap="round" stroke-linejoin="round"/><ellipse cx="55.2" cy="52.5" rx="2.6" ry="2.4" fill="#3a3a36"/><ellipse cx="68.5" cy="57" rx="2.4" ry="2.4" fill="#2a2826"/><ellipse cx="57" cy="22.5" rx="4.2" ry="5" fill="#7e6556"/><polygon points="49.8,20 51,14 56,12.7 61.5,14 62.5,20 61,22 51,22" fill="#4d6e80"/></svg><svg class="run" width="14" height="14" viewBox="0 0 14 14" style="position:absolute;left:3.5px;top:107.5px;overflow:visible"><g fill="none" stroke="#747474" stroke-width="0.9" stroke-linecap="round" stroke-linejoin="round"><circle cx="6.6" cy="2.3" r="1.15" fill="#747474" stroke="none"/><path d="M5.8,3.6 L4.6,7.6" stroke-width="1.3"/><path d="M5.3,4.1 L2.8,3.4 L1.1,5.1"/><path d="M6.1,5.1 L7.3,5.8 L9.1,4.1"/><path d="M4.6,7.6 L2.8,9.9 L0.3,8.4"/><path d="M4.6,7.6 L7.3,9.1 L9.1,11.9"/></g></svg></div><div class="cap" style="top:130.2px">Jumping Down</div></div>
<div class="card" style="left:28px;top:392.8px"><div class="img" style="background:linear-gradient(#a2a2a2 0,#a1a1a1 60.5px,#9d9d9d 70.0px,#b9b9b9 71.5px,#c1c1c1 74.5px,#c9c9c9 122px)"><svg width="108" height="122" viewBox="0 0 108 122" style="position:absolute;left:0;top:0"><polygon points="72,122 74,117 84,115 92,114 98,119 98,122" fill="#6e6e6e" stroke="#6e6e6e" stroke-width="2.5" stroke-linejoin="round" opacity="0.85" filter="url(#bl)"/><polyline points="48,64 53,80" fill="none" stroke="#4c879e" stroke-width="9.5" stroke-linecap="round" stroke-linejoin="round"/><polyline points="53,80 52,100" fill="none" stroke="#4c879e" stroke-width="6.8" stroke-linecap="round" stroke-linejoin="round"/><polyline points="52,100 55,111" fill="none" stroke="#4c879e" stroke-width="5.2" stroke-linecap="round" stroke-linejoin="round"/><ellipse cx="53" cy="80" rx="2.8" ry="1.8" fill="#2d3033"/><polyline points="60,64 65,81" fill="none" stroke="#4c879e" stroke-width="9.5" stroke-linecap="round" stroke-linejoin="round"/><polyline points="65,81 61,100" fill="none" stroke="#4c879e" stroke-width="6.8" stroke-linecap="round" stroke-linejoin="round"/><polyline points="61,100 66,107" fill="none" stroke="#4c879e" stroke-width="5.2" stroke-linecap="round" stroke-linejoin="round"/><ellipse cx="65" cy="81" rx="2.8" ry="1.8" fill="#2d3033"/><ellipse cx="53" cy="60" rx="10" ry="7" fill="#4c879e"/><polyline points="56.2,51 53,60" fill="none" stroke="#4c879e" stroke-width="10" stroke-linecap="round" stroke-linejoin="round"/><polygon points="43.988,35 57.748,34 68.068,42 62.048,55 49.148,55" fill="#4c879e" stroke="#4c879e" stroke-width="2.5" stroke-linejoin="round"/><polygon points="57.748,34 68.068,42 62.048,55 52.867999999999995,55" fill="#2f6274" opacity="0.35"/><polyline points="40,38 40,52" fill="none" stroke="#4c879e" stroke-width="6" stroke-linecap="round" stroke-linejoin="round"/><polyline points="40,52 43,64" fill="none" stroke="#4c879e" stroke-width="4.8" stroke-linecap="round" stroke-linejoin="round"/><polyline points="70,44 73,55" fill="none" stroke="#4c879e" stroke-width="6" stroke-linecap="round" stroke-linejoin="round"/><polyline points="73,55 73,65" fill="none" stroke="#4c879e" stroke-width="4.8" stroke-linecap="round" stroke-linejoin="round"/><polyline points="74,40.5 73.5,44.5" fill="none" stroke="#2d3033" stroke-width="3" stroke-linecap="round" stroke-linejoin="round"/><path d="M67,33.5 C67,22.7 81,22.7 81,33.5 C81,40.7 76.45,41.9 74,41.9 C71.55,41.9 67,40.7 67,33.5 Z" fill="#4c879e"/><ellipse cx="71.55" cy="30.7" rx="2.8000000000000003" ry="3.2" fill="#6aa4ba"/></svg><svg class="run" width="14" height="14" viewBox="0 0 14 14" style="position:absolute;left:3.5px;top:107.5px;overflow:visible"><g fill="none" stroke="#747474" stroke-width="0.9" stroke-linecap="round" stroke-linejoin="round"><circle cx="6.6" cy="2.3" r="1.15" fill="#747474" stroke="none"/><path d="M5.8,3.6 L4.6,7.6" stroke-width="1.3"/><path d="M5.3,4.1 L2.8,3.4 L1.1,5.1"/><path d="M6.1,5.1 L7.3,5.8 L9.1,4.1"/><path d="M4.6,7.6 L2.8,9.9 L0.3,8.4"/><path d="M4.6,7.6 L7.3,9.1 L9.1,11.9"/></g></svg></div><div class="cap" style="top:130.2px">Jumping Down</div></div>
<div class="abs" style="left:150px;top:394.8px;width:108px;height:146px;background:linear-gradient(#cdcdcd 0,#cbcbcb 70px,#d6d6d6 72px,#dadada 122px,#fff 122px);border:1px solid #dadada"></div>
<div class="abs" style="left:148px;top:392.8px;width:108px;height:146px;background:linear-gradient(#cdcdcd 0,#cbcbcb 70px,#d6d6d6 72px,#dadada 122px,#fff 122px);border:1px solid #dadada"></div>
<div class="card" style="left:146px;top:390.8px"><div class="img" style="background:linear-gradient(#a2a2a2 0,#a1a1a1 54.2px,#9d9d9d 63.7px,#b9b9b9 65.2px,#c1c1c1 68.2px,#c9c9c9 122px)"><svg width="108" height="122" viewBox="0 0 108 122" style="position:absolute;left:0;top:0"><polygon points="45,98 60,94 75,90 92,99 78,96 70,98 55,101" fill="#6e6e6e" stroke="#6e6e6e" stroke-width="2.5" stroke-linejoin="round" opacity="0.85" filter="url(#bl)"/><polyline points="47,66 41,80 42,95" fill="none" stroke="#262626" stroke-width="7.5" stroke-linecap="round" stroke-linejoin="round"/><polyline points="42,95 36,100" fill="none" stroke="#2a2a2a" stroke-width="4.5" stroke-linecap="round" stroke-linejoin="round"/><polyline points="58,66 63,82 67,100" fill="none" stroke="#262626" stroke-width="7.5" stroke-linecap="round" stroke-linejoin="round"/><polyline points="67,100 69,110" fill="none" stroke="#2a2a2a" stroke-width="4.5" stroke-linecap="round" stroke-linejoin="round"/><polygon points="42,62 62,62 64,73 40,73" fill="#2a2a2a"/><polygon points="44,35 62,36 61,63 45,63" fill="#4d4d4a" stroke="#4d4d4a" stroke-width="2.5" stroke-linejoin="round"/><polygon points="45,52 61,52 61,55 45,55" fill="#6a3a30"/><polyline points="45,40 41,51" fill="none" stroke="#2f2f2f" stroke-width="4.5" stroke-linecap="round" stroke-linejoin="round"/><polyline points="41,51 36,62" fill="none" stroke="#3a3a3a" stroke-width="3.6" stroke-linecap="round" stroke-linejoin="round"/><polyline points="62,42 69,51" fill="none" stroke="#2f2f2f" stroke-width="4.5" stroke-linecap="round" stroke-linejoin="round"/><polyline points="69,51 79,60" fill="none" stroke="#3a3a3a" stroke-width="3.6" stroke-linecap="round" stroke-linejoin="round"/><ellipse cx="35.5" cy="63" rx="1.8" ry="1.8" fill="#9a7868"/><ellipse cx="80" cy="60.5" rx="1.8" ry="1.8" fill="#9a7868"/><polyline points="68,32 77,50 80,62 78,75" fill="none" stroke="#7a6250" stroke-width="1.6" stroke-linecap="round" stroke-linejoin="round"/><ellipse cx="52" cy="28" rx="6" ry="7.5" fill="#2c2c2c"/><ellipse cx="53.5" cy="31" rx="2.8" ry="3.8" fill="#9a7868"/></svg><div style="position:absolute;left:3.5px;top:106.5px;width:10.5px;height:10.5px;border-radius:50%;background:#555;color:#fff;font-size:6.8px;font-weight:bold;line-height:10.5px;text-align:center">12</div><svg class="run" width="14" height="14" viewBox="0 0 14 14" style="position:absolute;left:17.5px;top:107.5px;overflow:visible"><g fill="none" stroke="#747474" stroke-width="0.9" stroke-linecap="round" stroke-linejoin="round"><circle cx="6.6" cy="2.3" r="1.15" fill="#747474" stroke="none"/><path d="M5.8,3.6 L4.6,7.6" stroke-width="1.3"/><path d="M5.3,4.1 L2.8,3.4 L1.1,5.1"/><path d="M6.1,5.1 L7.3,5.8 L9.1,4.1"/><path d="M4.6,7.6 L2.8,9.9 L0.3,8.4"/><path d="M4.6,7.6 L7.3,9.1 L9.1,11.9"/></g></svg></div><div class="cap" style="top:130.2px">Longbow Locomotion Pack</div></div>
<div class="abs" style="left:270.4px;top:394.8px;width:108px;height:146px;background:linear-gradient(#cdcdcd 0,#cbcbcb 70px,#d6d6d6 72px,#dadada 122px,#fff 122px);border:1px solid #dadada"></div>
<div class="abs" style="left:268.4px;top:392.8px;width:108px;height:146px;background:linear-gradient(#cdcdcd 0,#cbcbcb 70px,#d6d6d6 72px,#dadada 122px,#fff 122px);border:1px solid #dadada"></div>
<div class="card" style="left:266.4px;top:390.8px"><div class="img" style="background:linear-gradient(#a2a2a2 0,#a1a1a1 55px,#9d9d9d 64.5px,#b9b9b9 66px,#c1c1c1 69px,#c9c9c9 122px)"><svg width="108" height="122" viewBox="0 0 108 122" style="position:absolute;left:0;top:0"><polygon points="45,99 55,96 65,95 76,93 84,92 92,96 84,99 90,103 72,104 55,102" fill="#6e6e6e" stroke="#6e6e6e" stroke-width="2.5" stroke-linejoin="round" opacity="0.85" filter="url(#bl)"/><polyline points="46,60 44,78 41,94" fill="none" stroke="#2a2a2a" stroke-width="7.5" stroke-linecap="round" stroke-linejoin="round"/><polyline points="41,94 41,100" fill="none" stroke="#3a3a3a" stroke-width="4.5" stroke-linecap="round" stroke-linejoin="round"/><polyline points="61,60 67,74 60,84" fill="none" stroke="#262626" stroke-width="7.5" stroke-linecap="round" stroke-linejoin="round"/><polyline points="60,84 59,91" fill="none" stroke="#222" stroke-width="4.5" stroke-linecap="round" stroke-linejoin="round"/><polygon points="42,54 64,54 66,66 40,65" fill="#333"/><polygon points="69,36 78,38 80,60 70,58" fill="#505358"/><polygon points="40,30 60,27 68,35 66,57 44,59 38,45" fill="#2d2d2d" stroke="#2d2d2d" stroke-width="2" stroke-linejoin="round"/><polygon points="41,55 48,55 48,66 41,64" fill="#5a5a5a"/><polyline points="43,35 39,47 52,52" fill="none" stroke="#454545" stroke-width="5.5" stroke-linecap="round" stroke-linejoin="round"/><polyline points="64,38 70,50 72,58" fill="none" stroke="#383838" stroke-width="5" stroke-linecap="round" stroke-linejoin="round"/><polyline points="83,0 54,50" fill="none" stroke="#3a3d44" stroke-width="2.4" stroke-linecap="round" stroke-linejoin="round"/><ellipse cx="62" cy="24" rx="5.6" ry="7.2" fill="#2a2a2a"/><polygon points="59,23 65,23 64,30 60,30" fill="#8a8a8a"/></svg><div style="position:absolute;left:3.5px;top:106.5px;width:10.5px;height:10.5px;border-radius:50%;background:#555;color:#fff;font-size:6.8px;font-weight:bold;line-height:10.5px;text-align:center">49</div><svg class="run" width="14" height="14" viewBox="0 0 14 14" style="position:absolute;left:17.5px;top:107.5px;overflow:visible"><g fill="none" stroke="#747474" stroke-width="0.9" stroke-linecap="round" stroke-linejoin="round"><circle cx="6.6" cy="2.3" r="1.15" fill="#747474" stroke="none"/><path d="M5.8,3.6 L4.6,7.6" stroke-width="1.3"/><path d="M5.3,4.1 L2.8,3.4 L1.1,5.1"/><path d="M6.1,5.1 L7.3,5.8 L9.1,4.1"/><path d="M4.6,7.6 L2.8,9.9 L0.3,8.4"/><path d="M4.6,7.6 L7.3,9.1 L9.1,11.9"/></g></svg></div><div class="cap" style="top:130.2px">Sword And Shield Pack</div></div>
<div class="abs" style="left:390.75px;top:394.8px;width:108px;height:146px;background:linear-gradient(#cdcdcd 0,#cbcbcb 70px,#d6d6d6 72px,#dadada 122px,#fff 122px);border:1px solid #dadada"></div>
<div class="abs" style="left:388.75px;top:392.8px;width:108px;height:146px;background:linear-gradient(#cdcdcd 0,#cbcbcb 70px,#d6d6d6 72px,#dadada 122px,#fff 122px);border:1px solid #dadada"></div>
<div class="card" style="left:386.75px;top:390.8px"><div class="img" style="background:linear-gradient(#a2a2a2 0,#a1a1a1 60.5px,#9d9d9d 70.0px,#b9b9b9 71.5px,#c1c1c1 74.5px,#c9c9c9 122px)"><svg width="108" height="122" viewBox="0 0 108 122" style="position:absolute;left:0;top:0"><polygon points="55,96 66,93 78,92 92,98 80,100 80,107 70,100" fill="#6e6e6e" stroke="#6e6e6e" stroke-width="2.5" stroke-linejoin="round" opacity="0.85" filter="url(#bl)"/><polyline points="48,62 50,78" fill="none" stroke="#d36a60" stroke-width="9" stroke-linecap="round" stroke-linejoin="round"/><polyline points="50,78 52,90" fill="none" stroke="#d36a60" stroke-width="6.2" stroke-linecap="round" stroke-linejoin="round"/><polyline points="52,90 53,97" fill="none" stroke="#d36a60" stroke-width="4.8" stroke-linecap="round" stroke-linejoin="round"/><ellipse cx="50" cy="78" rx="2.8" ry="1.8" fill="#5f3431"/><polyline points="60,62 68,76" fill="none" stroke="#d36a60" stroke-width="9" stroke-linecap="round" stroke-linejoin="round"/><polyline points="68,76 70,103" fill="none" stroke="#d36a60" stroke-width="6.2" stroke-linecap="round" stroke-linejoin="round"/><polyline points="70,103 78,112" fill="none" stroke="#d36a60" stroke-width="4.8" stroke-linecap="round" stroke-linejoin="round"/><ellipse cx="68" cy="76" rx="2.8" ry="1.8" fill="#5f3431"/><ellipse cx="53" cy="59" rx="9.5" ry="7" fill="#d36a60"/><polyline points="58.8,48 53,59" fill="none" stroke="#d36a60" stroke-width="8" stroke-linecap="round" stroke-linejoin="round"/><ellipse cx="56" cy="51" rx="5" ry="4.5" fill="#5f3431"/><polygon points="51.232,27 63.272,28 66.712,42 59.832,52 52.952,50" fill="#d36a60" stroke="#d36a60" stroke-width="2.5" stroke-linejoin="round"/><polygon points="63.272,28 66.712,42 59.832,52 59.251999999999995,52" fill="#a54c44" opacity="0.35"/><polyline points="55,29 68,27" fill="none" stroke="#d36a60" stroke-width="4.8" stroke-linecap="round" stroke-linejoin="round"/><polyline points="68,27 84,29" fill="none" stroke="#d36a60" stroke-width="4.2" stroke-linecap="round" stroke-linejoin="round"/><polyline points="63,42 67,55" fill="none" stroke="#d36a60" stroke-width="4.8" stroke-linecap="round" stroke-linejoin="round"/><polyline points="67,55 70,61" fill="none" stroke="#d36a60" stroke-width="4.2" stroke-linecap="round" stroke-linejoin="round"/><polyline points="66.5,28.5 66.0,32.5" fill="none" stroke="#5f3431" stroke-width="3" stroke-linecap="round" stroke-linejoin="round"/><path d="M60.0,22.5 C60.0,13.049999999999999 73.0,13.049999999999999 73.0,22.5 C73.0,28.8 68.775,29.85 66.5,29.85 C64.225,29.85 60.0,28.8 60.0,22.5 Z" fill="#d36a60"/><ellipse cx="64.225" cy="20.05" rx="2.6" ry="2.8000000000000003" fill="#e4897f"/></svg><div style="position:absolute;left:3.5px;top:106.5px;width:10.5px;height:10.5px;border-radius:50%;background:#555;color:#fff;font-size:6.8px;font-weight:bold;line-height:10.5px;text-align:center">39</div><svg class="run" width="14" height="14" viewBox="0 0 14 14" style="position:absolute;left:17.5px;top:107.5px;overflow:visible"><g fill="none" stroke="#747474" stroke-width="0.9" stroke-linecap="round" stroke-linejoin="round"><circle cx="6.6" cy="2.3" r="1.15" fill="#747474" stroke="none"/><path d="M5.8,3.6 L4.6,7.6" stroke-width="1.3"/><path d="M5.3,4.1 L2.8,3.4 L1.1,5.1"/><path d="M6.1,5.1 L7.3,5.8 L9.1,4.1"/><path d="M4.6,7.6 L2.8,9.9 L0.3,8.4"/><path d="M4.6,7.6 L7.3,9.1 L9.1,11.9"/></g></svg></div><div class="cap" style="top:130.2px">Capoeira Pack</div></div>
<div class="card" style="left:509px;top:392.8px"><div class="img" style="background:linear-gradient(#a2a2a2 0,#a1a1a1 60.5px,#9d9d9d 70.0px,#b9b9b9 71.5px,#c1c1c1 74.5px,#c9c9c9 122px)"><svg width="108" height="122" viewBox="0 0 108 122" style="position:absolute;left:0;top:0"><polygon points="60,86 68,83 76,82 78,84 68,88" fill="#6e6e6e" stroke="#6e6e6e" stroke-width="2.5" stroke-linejoin="round" opacity="0.85" filter="url(#bl)"/><polyline points="48,64 47,85" fill="none" stroke="#d36a60" stroke-width="9" stroke-linecap="round" stroke-linejoin="round"/><polyline points="47,85 37,81" fill="none" stroke="#d36a60" stroke-width="6.2" stroke-linecap="round" stroke-linejoin="round"/><polyline points="37,81 34,84" fill="none" stroke="#d36a60" stroke-width="4.8" stroke-linecap="round" stroke-linejoin="round"/><ellipse cx="47" cy="85" rx="2.8" ry="1.8" fill="#5f3431"/><polyline points="60,64 63,84" fill="none" stroke="#d36a60" stroke-width="9" stroke-linecap="round" stroke-linejoin="round"/><polyline points="63,84 62,87" fill="none" stroke="#d36a60" stroke-width="6.2" stroke-linecap="round" stroke-linejoin="round"/><polyline points="62,87 62,88" fill="none" stroke="#d36a60" stroke-width="4.8" stroke-linecap="round" stroke-linejoin="round"/><ellipse cx="63" cy="84" rx="2.8" ry="1.8" fill="#5f3431"/><ellipse cx="54" cy="59" rx="9.5" ry="7.5" fill="#d36a60"/><polyline points="52.0,47 54,59" fill="none" stroke="#d36a60" stroke-width="8" stroke-linecap="round" stroke-linejoin="round"/><ellipse cx="54" cy="51" rx="5" ry="4.5" fill="#5f3431"/><polygon points="41.68,31 61.46,32 60.799,40.55 56.816,51.0 47.786,51.0 43.115,40.0" fill="#d36a60" stroke="#d36a60" stroke-width="2.5" stroke-linejoin="round"/><polygon points="61.46,32 60.799,40.55 56.816,51.0 53.57,51.0" fill="#a54c44" opacity="0.35"/><polyline points="45,35 42,50" fill="none" stroke="#d36a60" stroke-width="4.8" stroke-linecap="round" stroke-linejoin="round"/><polyline points="42,50 43,68" fill="none" stroke="#d36a60" stroke-width="4.2" stroke-linecap="round" stroke-linejoin="round"/><polyline points="62,37 63,52" fill="none" stroke="#d36a60" stroke-width="4.8" stroke-linecap="round" stroke-linejoin="round"/><polyline points="63,52 64,62" fill="none" stroke="#d36a60" stroke-width="4.2" stroke-linecap="round" stroke-linejoin="round"/><polyline points="54,28.0 53.5,32.0" fill="none" stroke="#5f3431" stroke-width="3" stroke-linecap="round" stroke-linejoin="round"/><path d="M48,22.5 C48,13.725 60,13.725 60,22.5 C60,28.35 56.1,29.325 54,29.325 C51.9,29.325 48,28.35 48,22.5 Z" fill="#d36a60"/><ellipse cx="51.9" cy="20.225" rx="2.4000000000000004" ry="2.6" fill="#e4897f"/></svg><svg class="run" width="14" height="14" viewBox="0 0 14 14" style="position:absolute;left:3.5px;top:107.5px;overflow:visible"><g fill="none" stroke="#747474" stroke-width="0.9" stroke-linecap="round" stroke-linejoin="round"><circle cx="6.6" cy="2.3" r="1.15" fill="#747474" stroke="none"/><path d="M5.8,3.6 L4.6,7.6" stroke-width="1.3"/><path d="M5.3,4.1 L2.8,3.4 L1.1,5.1"/><path d="M6.1,5.1 L7.3,5.8 L9.1,4.1"/><path d="M4.6,7.6 L2.8,9.9 L0.3,8.4"/><path d="M4.6,7.6 L7.3,9.1 L9.1,11.9"/></g></svg></div><div class="cap" style="top:130.2px">Praying</div></div>
<div class="card" style="left:28px;top:550.2px"><div class="img" style="background:linear-gradient(#a2a2a2 0,#a1a1a1 59px,#9d9d9d 68.5px,#b9b9b9 70px,#c1c1c1 73px,#c9c9c9 122px)"><svg width="108" height="122" viewBox="0 0 108 122" style="position:absolute;left:0;top:0"><polygon points="40,90 52,87 60,86 85,85 75,90 55,92" fill="#6e6e6e" stroke="#6e6e6e" stroke-width="2.5" stroke-linejoin="round" opacity="0.85" filter="url(#bl)"/><polyline points="50,62 50,83" fill="none" stroke="#4c879e" stroke-width="9.5" stroke-linecap="round" stroke-linejoin="round"/><polyline points="50,83 35,82" fill="none" stroke="#4c879e" stroke-width="6.8" stroke-linecap="round" stroke-linejoin="round"/><polyline points="35,82 30,88" fill="none" stroke="#4c879e" stroke-width="5.2" stroke-linecap="round" stroke-linejoin="round"/><ellipse cx="50" cy="83" rx="2.8" ry="1.8" fill="#2d3033"/><polyline points="60,60 78,62" fill="none" stroke="#4c879e" stroke-width="9.5" stroke-linecap="round" stroke-linejoin="round"/><polyline points="78,62 75,83" fill="none" stroke="#4c879e" stroke-width="6.8" stroke-linecap="round" stroke-linejoin="round"/><polyline points="75,83 80,91" fill="none" stroke="#4c879e" stroke-width="5.2" stroke-linecap="round" stroke-linejoin="round"/><ellipse cx="78" cy="62" rx="2.8" ry="1.8" fill="#2d3033"/><ellipse cx="54" cy="58" rx="9" ry="6.5" fill="#4c879e"/><polyline points="55.75,51 54,58" fill="none" stroke="#4c879e" stroke-width="10" stroke-linecap="round" stroke-linejoin="round"/><polygon points="46.505,30 64.565,31 64.291,41.8 60.716499999999996,55.0 51.0845,55.0 47.166000000000004,41.25" fill="#4c879e" stroke="#4c879e" stroke-width="2.5" stroke-linejoin="round"/><polygon points="64.565,31 64.291,41.8 60.716499999999996,55.0 57.535,55.0" fill="#2f6274" opacity="0.35"/><polyline points="45,34 37,48" fill="none" stroke="#4c879e" stroke-width="6" stroke-linecap="round" stroke-linejoin="round"/><polyline points="37,48 35,69" fill="none" stroke="#4c879e" stroke-width="4.8" stroke-linecap="round" stroke-linejoin="round"/><polyline points="66,38 70,53" fill="none" stroke="#4c879e" stroke-width="6" stroke-linecap="round" stroke-linejoin="round"/><polyline points="70,53 72,62" fill="none" stroke="#4c879e" stroke-width="4.8" stroke-linecap="round" stroke-linejoin="round"/><polyline points="64,29.5 63.5,33.5" fill="none" stroke="#2d3033" stroke-width="3" stroke-linecap="round" stroke-linejoin="round"/><path d="M58,23.5 C58,14.049999999999999 70,14.049999999999999 70,23.5 C70,29.8 66.1,30.85 64,30.85 C61.9,30.85 58,29.8 58,23.5 Z" fill="#4c879e"/><ellipse cx="61.9" cy="21.05" rx="2.4000000000000004" ry="2.8000000000000003" fill="#6aa4ba"/></svg><svg class="run" width="14" height="14" viewBox="0 0 14 14" style="position:absolute;left:3.5px;top:107.5px;overflow:visible"><g fill="none" stroke="#747474" stroke-width="0.9" stroke-linecap="round" stroke-linejoin="round"><circle cx="6.6" cy="2.3" r="1.15" fill="#747474" stroke="none"/><path d="M5.8,3.6 L4.6,7.6" stroke-width="1.3"/><path d="M5.3,4.1 L2.8,3.4 L1.1,5.1"/><path d="M6.1,5.1 L7.3,5.8 L9.1,4.1"/><path d="M4.6,7.6 L2.8,9.9 L0.3,8.4"/><path d="M4.6,7.6 L7.3,9.1 L9.1,11.9"/></g></svg></div><div class="cap" style="top:130.2px"></div></div>
<div class="card" style="left:148px;top:550.2px"><div class="img" style="background:linear-gradient(#a2a2a2 0,#a1a1a1 62px,#9d9d9d 71.5px,#b9b9b9 73px,#c1c1c1 76px,#c9c9c9 122px)"><svg width="108" height="122" viewBox="0 0 108 122" style="position:absolute;left:0;top:0"><polygon points="60,112 70,105 80,101 95,98 82,104 72,114" fill="#6e6e6e" stroke="#6e6e6e" stroke-width="2.5" stroke-linejoin="round" opacity="0.85" filter="url(#bl)"/><polyline points="47,65 47,88" fill="none" stroke="#d36a60" stroke-width="9" stroke-linecap="round" stroke-linejoin="round"/><polyline points="47,88 46,108" fill="none" stroke="#d36a60" stroke-width="6.2" stroke-linecap="round" stroke-linejoin="round"/><polyline points="46,108 42,120" fill="none" stroke="#d36a60" stroke-width="4.8" stroke-linecap="round" stroke-linejoin="round"/><ellipse cx="47" cy="88" rx="2.8" ry="1.8" fill="#5f3431"/><polyline points="59,65 64,87" fill="none" stroke="#d36a60" stroke-width="9" stroke-linecap="round" stroke-linejoin="round"/><polyline points="64,87 66,108" fill="none" stroke="#d36a60" stroke-width="6.2" stroke-linecap="round" stroke-linejoin="round"/><polyline points="66,108 71,114" fill="none" stroke="#d36a60" stroke-width="4.8" stroke-linecap="round" stroke-linejoin="round"/><ellipse cx="64" cy="87" rx="2.8" ry="1.8" fill="#5f3431"/><ellipse cx="52" cy="60" rx="10" ry="7.5" fill="#d36a60"/><polyline points="54.75,47 52,60" fill="none" stroke="#d36a60" stroke-width="8" stroke-linecap="round" stroke-linejoin="round"/><ellipse cx="55" cy="53" rx="5" ry="4.5" fill="#5f3431"/><polygon points="47.225,31 61.845,32 61.571,40.55 58.5125,51.0 51.2885,51.0 47.886,40.0" fill="#d36a60" stroke="#d36a60" stroke-width="2.5" stroke-linejoin="round"/><polygon points="61.845,32 61.571,40.55 58.5125,51.0 56.535,51.0" fill="#a54c44" opacity="0.35"/><polyline points="47,37 33,30" fill="none" stroke="#d36a60" stroke-width="4.8" stroke-linecap="round" stroke-linejoin="round"/><polyline points="33,30 14,18" fill="none" stroke="#d36a60" stroke-width="4.2" stroke-linecap="round" stroke-linejoin="round"/><polyline points="63,38 72,42" fill="none" stroke="#d36a60" stroke-width="4.8" stroke-linecap="round" stroke-linejoin="round"/><polyline points="72,42 86,46" fill="none" stroke="#d36a60" stroke-width="4.2" stroke-linecap="round" stroke-linejoin="round"/><polyline points="57,31 56.5,35" fill="none" stroke="#5f3431" stroke-width="3" stroke-linecap="round" stroke-linejoin="round"/><path d="M50.5,24 C50.5,13.2 63.5,13.2 63.5,24 C63.5,31.2 59.275,32.4 57,32.4 C54.725,32.4 50.5,31.2 50.5,24 Z" fill="#d36a60"/><ellipse cx="54.725" cy="21.2" rx="2.6" ry="3.2" fill="#e4897f"/></svg><svg class="run" width="14" height="14" viewBox="0 0 14 14" style="position:absolute;left:3.5px;top:107.5px;overflow:visible"><g fill="none" stroke="#747474" stroke-width="0.9" stroke-linecap="round" stroke-linejoin="round"><circle cx="6.6" cy="2.3" r="1.15" fill="#747474" stroke="none"/><path d="M5.8,3.6 L4.6,7.6" stroke-width="1.3"/><path d="M5.3,4.1 L2.8,3.4 L1.1,5.1"/><path d="M6.1,5.1 L7.3,5.8 L9.1,4.1"/><path d="M4.6,7.6 L2.8,9.9 L0.3,8.4"/><path d="M4.6,7.6 L7.3,9.1 L9.1,11.9"/></g></svg></div><div class="cap" style="top:130.2px"></div></div>
<div class="card" style="left:268.4px;top:550.2px"><div class="img" style="background:linear-gradient(#a2a2a2 0,#a1a1a1 59.599999999999994px,#9d9d9d 69.1px,#b9b9b9 70.6px,#c1c1c1 73.6px,#c9c9c9 122px)"><svg width="108" height="122" viewBox="0 0 108 122" style="position:absolute;left:0;top:0"><polygon points="45,112 58,104 70,98 90,95 80,100 70,105" fill="#6e6e6e" stroke="#6e6e6e" stroke-width="2.5" stroke-linejoin="round" opacity="0.85" filter="url(#bl)"/><polyline points="48,62 45,82" fill="none" stroke="#4c879e" stroke-width="9.5" stroke-linecap="round" stroke-linejoin="round"/><polyline points="45,82 36,105" fill="none" stroke="#4c879e" stroke-width="6.8" stroke-linecap="round" stroke-linejoin="round"/><polyline points="36,105 37,116" fill="none" stroke="#4c879e" stroke-width="5.2" stroke-linecap="round" stroke-linejoin="round"/><ellipse cx="45" cy="82" rx="2.8" ry="1.8" fill="#2d3033"/><polyline points="60,62 65,85" fill="none" stroke="#4c879e" stroke-width="9.5" stroke-linecap="round" stroke-linejoin="round"/><polyline points="65,85 62,100" fill="none" stroke="#4c879e" stroke-width="6.8" stroke-linecap="round" stroke-linejoin="round"/><polyline points="62,100 68,109" fill="none" stroke="#4c879e" stroke-width="5.2" stroke-linecap="round" stroke-linejoin="round"/><ellipse cx="65" cy="85" rx="2.8" ry="1.8" fill="#2d3033"/><ellipse cx="54" cy="59" rx="10" ry="7" fill="#4c879e"/><polyline points="59.75,51 54,59" fill="none" stroke="#4c879e" stroke-width="10" stroke-linecap="round" stroke-linejoin="round"/><polygon points="50.505,29 70.285,28 68.463,40.15 63.5125,55.0 55.0845,55.0 51.166000000000004,40.7" fill="#4c879e" stroke="#4c879e" stroke-width="2.5" stroke-linejoin="round"/><polygon points="70.285,28 68.463,40.15 63.5125,55.0 62.394999999999996,55.0" fill="#2f6274" opacity="0.35"/><polyline points="52,33 51,45" fill="none" stroke="#4c879e" stroke-width="6" stroke-linecap="round" stroke-linejoin="round"/><polyline points="51,45 75,42" fill="none" stroke="#4c879e" stroke-width="4.8" stroke-linecap="round" stroke-linejoin="round"/><polyline points="70,38 77,48" fill="none" stroke="#4c879e" stroke-width="6" stroke-linecap="round" stroke-linejoin="round"/><polyline points="77,48 78,42" fill="none" stroke="#4c879e" stroke-width="4.8" stroke-linecap="round" stroke-linejoin="round"/><polyline points="66.5,30 66.0,34" fill="none" stroke="#2d3033" stroke-width="3" stroke-linecap="round" stroke-linejoin="round"/><path d="M60.5,24 C60.5,14.549999999999999 72.5,14.549999999999999 72.5,24 C72.5,30.3 68.6,31.35 66.5,31.35 C64.4,31.35 60.5,30.3 60.5,24 Z" fill="#4c879e"/><ellipse cx="64.4" cy="21.55" rx="2.4000000000000004" ry="2.8000000000000003" fill="#6aa4ba"/></svg><svg class="run" width="14" height="14" viewBox="0 0 14 14" style="position:absolute;left:3.5px;top:107.5px;overflow:visible"><g fill="none" stroke="#747474" stroke-width="0.9" stroke-linecap="round" stroke-linejoin="round"><circle cx="6.6" cy="2.3" r="1.15" fill="#747474" stroke="none"/><path d="M5.8,3.6 L4.6,7.6" stroke-width="1.3"/><path d="M5.3,4.1 L2.8,3.4 L1.1,5.1"/><path d="M6.1,5.1 L7.3,5.8 L9.1,4.1"/><path d="M4.6,7.6 L2.8,9.9 L0.3,8.4"/><path d="M4.6,7.6 L7.3,9.1 L9.1,11.9"/></g></svg></div><div class="cap" style="top:130.2px"></div></div>
<div class="card" style="left:388.75px;top:550.2px"><div class="img" style="background:linear-gradient(#a2a2a2 0,#a1a1a1 61.8px,#9d9d9d 71.3px,#b9b9b9 72.8px,#c1c1c1 75.8px,#c9c9c9 122px)"><svg width="108" height="122" viewBox="0 0 108 122" style="position:absolute;left:0;top:0"><polygon points="58,108 68,102 78,98 84,100 70,106" fill="#6e6e6e" stroke="#6e6e6e" stroke-width="2.5" stroke-linejoin="round" opacity="0.85" filter="url(#bl)"/><polyline points="47,65 48,86" fill="none" stroke="#d36a60" stroke-width="9" stroke-linecap="round" stroke-linejoin="round"/><polyline points="48,86 45,105" fill="none" stroke="#d36a60" stroke-width="6.2" stroke-linecap="round" stroke-linejoin="round"/><polyline points="45,105 46,116" fill="none" stroke="#d36a60" stroke-width="4.8" stroke-linecap="round" stroke-linejoin="round"/><ellipse cx="48" cy="86" rx="2.8" ry="1.8" fill="#5f3431"/><polyline points="60,65 65,86" fill="none" stroke="#d36a60" stroke-width="9" stroke-linecap="round" stroke-linejoin="round"/><polyline points="65,86 66,104" fill="none" stroke="#d36a60" stroke-width="6.2" stroke-linecap="round" stroke-linejoin="round"/><polyline points="66,104 72,111" fill="none" stroke="#d36a60" stroke-width="4.8" stroke-linecap="round" stroke-linejoin="round"/><ellipse cx="65" cy="86" rx="2.8" ry="1.8" fill="#5f3431"/><ellipse cx="53" cy="60" rx="10" ry="7.5" fill="#d36a60"/><polyline points="50.75,48 53,60" fill="none" stroke="#d36a60" stroke-width="8" stroke-linecap="round" stroke-linejoin="round"/><ellipse cx="52" cy="52" rx="5" ry="4.5" fill="#5f3431"/><polygon points="39.785,33 61.285,33 59.849999999999994,41.55 55.1145,52.0 46.6865,52.0 41.607,41.55" fill="#d36a60" stroke="#d36a60" stroke-width="2.5" stroke-linejoin="round"/><polygon points="61.285,33 59.849999999999994,41.55 55.1145,52.0 52.535,52.0" fill="#a54c44" opacity="0.35"/><polyline points="42,36 40,48" fill="none" stroke="#d36a60" stroke-width="4.8" stroke-linecap="round" stroke-linejoin="round"/><polyline points="40,48 46,38" fill="none" stroke="#d36a60" stroke-width="4.2" stroke-linecap="round" stroke-linejoin="round"/><polyline points="62,38 70,45" fill="none" stroke="#d36a60" stroke-width="4.8" stroke-linecap="round" stroke-linejoin="round"/><polyline points="70,45 68,42" fill="none" stroke="#d36a60" stroke-width="4.2" stroke-linecap="round" stroke-linejoin="round"/><polyline points="52,31.5 51.5,35.5" fill="none" stroke="#5f3431" stroke-width="3" stroke-linecap="round" stroke-linejoin="round"/><path d="M45.5,24.5 C45.5,13.7 58.5,13.7 58.5,24.5 C58.5,31.7 54.275,32.9 52,32.9 C49.725,32.9 45.5,31.7 45.5,24.5 Z" fill="#d36a60"/><ellipse cx="49.725" cy="21.7" rx="2.6" ry="3.2" fill="#e4897f"/></svg><svg class="run" width="14" height="14" viewBox="0 0 14 14" style="position:absolute;left:3.5px;top:107.5px;overflow:visible"><g fill="none" stroke="#747474" stroke-width="0.9" stroke-linecap="round" stroke-linejoin="round"><circle cx="6.6" cy="2.3" r="1.15" fill="#747474" stroke="none"/><path d="M5.8,3.6 L4.6,7.6" stroke-width="1.3"/><path d="M5.3,4.1 L2.8,3.4 L1.1,5.1"/><path d="M6.1,5.1 L7.3,5.8 L9.1,4.1"/><path d="M4.6,7.6 L2.8,9.9 L0.3,8.4"/><path d="M4.6,7.6 L7.3,9.1 L9.1,11.9"/></g></svg></div><div class="cap" style="top:130.2px"></div></div>
<div class="card" style="left:509px;top:550.2px"><div class="img" style="background:linear-gradient(#a2a2a2 0,#a1a1a1 59.5px,#9d9d9d 69.0px,#b9b9b9 70.5px,#c1c1c1 73.5px,#c9c9c9 122px)"><svg width="108" height="122" viewBox="0 0 108 122" style="position:absolute;left:0;top:0"><polygon points="60,103 68,99 75,96 82,97 72,106" fill="#6e6e6e" stroke="#6e6e6e" stroke-width="2.5" stroke-linejoin="round" opacity="0.85" filter="url(#bl)"/><polyline points="48,65 50,86" fill="none" stroke="#4c879e" stroke-width="9.5" stroke-linecap="round" stroke-linejoin="round"/><polyline points="50,86 49,105" fill="none" stroke="#4c879e" stroke-width="6.8" stroke-linecap="round" stroke-linejoin="round"/><polyline points="49,105 50,113" fill="none" stroke="#4c879e" stroke-width="5.2" stroke-linecap="round" stroke-linejoin="round"/><ellipse cx="50" cy="86" rx="2.8" ry="1.8" fill="#2d3033"/><polyline points="59,65 60,86" fill="none" stroke="#4c879e" stroke-width="9.5" stroke-linecap="round" stroke-linejoin="round"/><polyline points="60,86 60,104" fill="none" stroke="#4c879e" stroke-width="6.8" stroke-linecap="round" stroke-linejoin="round"/><polyline points="60,104 63,111" fill="none" stroke="#4c879e" stroke-width="5.2" stroke-linecap="round" stroke-linejoin="round"/><ellipse cx="60" cy="86" rx="2.8" ry="1.8" fill="#2d3033"/><ellipse cx="54" cy="61" rx="10" ry="7" fill="#4c879e"/><polyline points="53.25,53 54,61" fill="none" stroke="#4c879e" stroke-width="10" stroke-linecap="round" stroke-linejoin="round"/><polygon points="42.715,31 62.495,31 62.221,42.7 58.5175,57.0 48.8855,57.0 44.150000000000006,42.7" fill="#4c879e" stroke="#4c879e" stroke-width="2.5" stroke-linejoin="round"/><polygon points="62.495,31 62.221,42.7 58.5175,57.0 54.605000000000004,57.0" fill="#2f6274" opacity="0.35"/><polyline points="40,35 38,50" fill="none" stroke="#4c879e" stroke-width="6" stroke-linecap="round" stroke-linejoin="round"/><polyline points="38,50 44,72" fill="none" stroke="#4c879e" stroke-width="4.8" stroke-linecap="round" stroke-linejoin="round"/><polyline points="63,38 65,55" fill="none" stroke="#4c879e" stroke-width="6" stroke-linecap="round" stroke-linejoin="round"/><polyline points="65,55 67,75" fill="none" stroke="#4c879e" stroke-width="4.8" stroke-linecap="round" stroke-linejoin="round"/><polyline points="56,28.5 55.5,32.5" fill="none" stroke="#2d3033" stroke-width="3" stroke-linecap="round" stroke-linejoin="round"/><path d="M50,23 C50,14.225 62,14.225 62,23 C62,28.85 58.1,29.825 56,29.825 C53.9,29.825 50,28.85 50,23 Z" fill="#4c879e"/><ellipse cx="53.9" cy="20.725" rx="2.4000000000000004" ry="2.6" fill="#6aa4ba"/></svg><svg class="run" width="14" height="14" viewBox="0 0 14 14" style="position:absolute;left:3.5px;top:107.5px;overflow:visible"><g fill="none" stroke="#747474" stroke-width="0.9" stroke-linecap="round" stroke-linejoin="round"><circle cx="6.6" cy="2.3" r="1.15" fill="#747474" stroke="none"/><path d="M5.8,3.6 L4.6,7.6" stroke-width="1.3"/><path d="M5.3,4.1 L2.8,3.4 L1.1,5.1"/><path d="M6.1,5.1 L7.3,5.8 L9.1,4.1"/><path d="M4.6,7.6 L2.8,9.9 L0.3,8.4"/><path d="M4.6,7.6 L7.3,9.1 L9.1,11.9"/></g></svg></div><div class="cap" style="top:130.2px"></div></div>
<div id="view" class="abs"><svg width="425" height="579" viewBox="642 66 425 579" style="position:absolute;left:0;top:0"><defs><linearGradient id="fog" x1="0" y1="66" x2="0" y2="645" gradientUnits="userSpaceOnUse">
<stop offset="0" stop-color="#a2a2a2"/>
<stop offset="0.175" stop-color="#a0a0a0"/>
<stop offset="0.2" stop-color="#9c9c9c"/>
<stop offset="0.275" stop-color="#b4b4b4"/>
<stop offset="0.325" stop-color="#bcbcbc" stop-opacity="0.92"/>
<stop offset="0.40" stop-color="#c1c1c1" stop-opacity="0.6"/>
<stop offset="0.50" stop-color="#c6c6c6" stop-opacity="0.25"/>
<stop offset="0.62" stop-color="#c8c8c8" stop-opacity="0"/>
<stop offset="1" stop-color="#cbcbcb" stop-opacity="0"/>
</linearGradient></defs><rect x="642" y="66" width="425" height="579" fill="#cbcbcb"/><g fill="#7a7a7a"><polygon points="1202.0,163.0 -4008.9,699.3 -4008.7,700.7"/><polygon points="1202.0,163.0 -3905.2,699.3 -3905.1,700.7"/><polygon points="1202.0,163.0 -3801.6,699.3 -3801.4,700.7"/><polygon points="1202.0,163.0 -3697.9,699.3 -3697.8,700.7"/><polygon points="1202.0,163.0 -3594.3,699.3 -3594.1,700.7"/><polygon points="1202.0,163.0 -3490.6,699.3 -3490.5,700.7"/><polygon points="1202.0,163.0 -3387.0,699.3 -3386.8,700.7"/><polygon points="1202.0,163.0 -3283.3,699.3 -3283.1,700.7"/><polygon points="1202.0,163.0 -3179.7,699.3 -3179.5,700.7"/><polygon points="1202.0,163.0 -3076.0,699.3 -3075.8,700.7"/><polygon points="1202.0,163.0 -2972.4,699.3 -2972.2,700.7"/><polygon points="1202.0,163.0 -2868.7,699.3 -2868.5,700.7"/><polygon points="1202.0,163.0 -2765.1,699.3 -2764.9,700.7"/><polygon points="1202.0,163.0 -2661.4,699.3 -2661.2,700.7"/><polygon points="1202.0,163.0 -2557.8,699.3 -2557.6,700.7"/><polygon points="1202.0,163.0 -2454.1,699.3 -2453.9,700.7"/><polygon points="1202.0,163.0 -2350.5,699.3 -2350.3,700.7"/><polygon points="1202.0,163.0 -2246.8,699.3 -2246.6,700.7"/><polygon points="1202.0,163.0 -2143.2,699.3 -2143.0,700.7"/><polygon points="1202.0,163.0 -2039.5,699.3 -2039.3,700.7"/><polygon points="1202.0,163.0 -1935.9,699.3 -1935.6,700.7"/><polygon points="1202.0,163.0 -1832.2,699.3 -1832.0,700.7"/><polygon points="1202.0,163.0 -1728.6,699.3 -1728.3,700.7"/><polygon points="1202.0,163.0 -1624.9,699.3 -1624.7,700.7"/><polygon points="1202.0,163.0 -1521.3,699.3 -1521.0,700.7"/><polygon points="1202.0,163.0 -1417.6,699.3 -1417.4,700.7"/><polygon points="1202.0,163.0 -1314.0,699.3 -1313.7,700.7"/><polygon points="1202.0,163.0 -1210.3,699.3 -1210.1,700.7"/><polygon points="1202.0,163.0 -1106.7,699.3 -1106.4,700.7"/><polygon points="1202.0,163.0 -1003.1,699.3 -1002.7,700.7"/><polygon points="1202.0,163.0 -899.4,699.4 -899.1,700.6"/><polygon points="1202.0,163.0 -795.8,699.4 -795.4,700.6"/><polygon points="1202.0,163.0 -692.1,699.4 -691.8,700.6"/><polygon points="1202.0,163.0 -588.5,699.4 -588.1,700.6"/><polygon points="1202.0,163.0 -484.8,699.4 -484.4,700.6"/><polygon points="1202.0,163.0 -381.2,699.4 -380.8,700.6"/><polygon points="1202.0,163.0 -277.6,699.4 -277.1,700.6"/><polygon points="1202.0,163.0 -173.9,699.4 -173.4,700.6"/><polygon points="1202.0,163.0 -70.3,699.4 -69.8,700.6"/><polygon points="1202.0,163.0 33.3,699.4 33.9,700.6"/><polygon points="1202.0,163.0 137.0,699.4 137.6,700.6"/><polygon points="1202.0,163.0 240.6,699.4 241.2,700.6"/><polygon points="1202.0,163.0 344.2,699.4 344.9,700.6"/><polygon points="1202.0,163.0 447.8,699.5 448.6,700.5"/><polygon points="1202.0,163.0 551.4,699.5 552.3,700.5"/><polygon points="1202.0,163.0 655.0,699.5 656.0,700.5"/><polygon points="1202.0,163.0 758.7,699.6 759.7,700.4"/><polygon points="1202.0,163.0 862.3,699.6 863.4,700.4"/><polygon points="1202.0,163.0 965.9,699.7 967.1,700.3"/><polygon points="-365.0,163.0 786.7,700.6 787.3,699.4"/><polygon points="-365.0,163.0 980.6,700.6 981.1,699.4"/><polygon points="-365.0,163.0 1174.5,700.6 1174.9,699.4"/><polygon points="-365.0,163.0 1368.4,700.6 1368.8,699.4"/><polygon points="-365.0,163.0 1562.2,700.6 1562.6,699.4"/><polygon points="-365.0,163.0 1756.1,700.6 1756.4,699.4"/><polygon points="-365.0,163.0 1950.0,700.7 1950.3,699.3"/><polygon points="-365.0,163.0 2143.9,700.7 2144.1,699.3"/><polygon points="-365.0,163.0 2337.7,700.7 2338.0,699.3"/><polygon points="-365.0,163.0 2531.6,700.7 2531.8,699.3"/><polygon points="-365.0,163.0 2725.5,700.7 2725.7,699.3"/><polygon points="-365.0,163.0 2919.3,700.7 2919.5,699.3"/><polygon points="-365.0,163.0 3113.2,700.7 3113.4,699.3"/><polygon points="-365.0,163.0 3307.0,700.7 3307.2,699.3"/><polygon points="-365.0,163.0 3500.9,700.7 3501.1,699.3"/><polygon points="-365.0,163.0 3694.8,700.7 3694.9,699.3"/><polygon points="-365.0,163.0 3888.6,700.7 3888.8,699.3"/><polygon points="-365.0,163.0 4082.5,700.7 4082.7,699.3"/><polygon points="-365.0,163.0 4276.4,700.7 4276.5,699.3"/><polygon points="-365.0,163.0 4470.2,700.7 4470.4,699.3"/><polygon points="-365.0,163.0 4664.1,700.7 4664.2,699.3"/><polygon points="-365.0,163.0 4857.9,700.7 4858.1,699.3"/><polygon points="-365.0,163.0 5051.8,700.7 5051.9,699.3"/><polygon points="-365.0,163.0 5245.7,700.7 5245.8,699.3"/><polygon points="-365.0,163.0 5439.5,700.7 5439.6,699.3"/><polygon points="-365.0,163.0 5633.4,700.7 5633.5,699.3"/><polygon points="-365.0,163.0 5827.2,700.7 5827.3,699.3"/><polygon points="-365.0,163.0 6021.1,700.7 6021.2,699.3"/><polygon points="-365.0,163.0 6215.0,700.7 6215.1,699.3"/><polygon points="-365.0,163.0 6408.8,700.7 6408.9,699.3"/><polygon points="-365.0,163.0 6602.7,700.7 6602.8,699.3"/><polygon points="-365.0,163.0 6796.5,700.7 6796.6,699.3"/><polygon points="-365.0,163.0 6990.4,700.7 6990.5,699.3"/><polygon points="-365.0,163.0 7184.2,700.7 7184.3,699.3"/><polygon points="-365.0,163.0 7378.1,700.7 7378.2,699.3"/><polygon points="-365.0,163.0 7572.0,700.7 7572.1,699.3"/><polygon points="-365.0,163.0 7765.8,700.7 7765.9,699.3"/><polygon points="-365.0,163.0 7959.7,700.7 7959.8,699.3"/><polygon points="-365.0,163.0 8153.5,700.7 8153.6,699.3"/><polygon points="-365.0,163.0 8347.4,700.7 8347.5,699.3"/><polygon points="-365.0,163.0 8541.3,700.7 8541.3,699.3"/><polygon points="-365.0,163.0 8735.1,700.7 8735.2,699.3"/><polygon points="-365.0,163.0 8929.0,700.7 8929.1,699.3"/><polygon points="-365.0,163.0 9122.8,700.7 9122.9,699.3"/><polygon points="-365.0,163.0 9316.7,700.7 9316.8,699.3"/></g><rect x="642" y="66" width="425" height="579" fill="url(#fog)"/><polygon points="883.4,418.9 895.6,417.4 924.5,425.6 933.4,425.6 951.2,423.4 955.7,421.2 964.6,419.6 974.6,421.2 976.8,426.7 981.2,432.3 1020.2,442.3 1053.5,450.0 1067.0,452.3 1067.0,462.3 1055.8,455.6 1020.2,446.7 981.2,439.0 971.2,441.2 957.9,449.0 950.0,460.0 946.1,465.4 924.8,473.4 916.8,482.7 894.0,492.0 880.7,502.8 875.0,500.0 880.7,492.0 888.7,486.8 894.0,477.4 912.7,465.4 894.0,472.0 882.0,477.4 860.0,490.0 850.0,494.8 850.0,486.8 882.0,464.0 888.7,454.7 907.4,445.4 922.0,440.0 924.8,432.0 908.7,422.7 884.5,422.3" fill="#000" opacity="0.45"/><polygon points="833.6,422.3 830.8,442.0 836.4,467.4 839.2,484.3 850.5,484.3 853.3,459.0 853.3,425.1" fill="#467f95"/><polygon points="845.0,423.0 853.3,425.1 853.3,459.0 850.5,484.3 846.0,484.0" fill="#2b5869" opacity="0.55"/><polygon points="861.8,427.9 859.0,447.6 864.6,475.9 867.4,492.8 878.7,492.8 881.5,464.6 884.3,430.7" fill="#467f95"/><polygon points="873.0,429.0 884.3,430.7 881.5,464.6 878.7,492.8 872.0,492.8" fill="#2b5869" opacity="0.55"/><polygon points="839.2,481.5 853.3,484.3 850.5,498.4 833.6,506.9 825.1,509.7 819.5,501.2 830.8,492.8" fill="#467f95"/><polygon points="839.2,481.5 853.3,484.3 850.5,498.4 840.0,496.0" fill="#2b5869" opacity="0.5"/><polygon points="867.4,490.0 881.5,492.8 878.7,512.5 861.8,521.0 850.5,521.0 853.3,506.9 864.6,498.4" fill="#69a2b7"/><polygon points="867.4,490.0 881.5,492.8 878.7,512.5 868.0,505.0" fill="#467f95"/><polygon points="822.3,346.1 819.5,374.3 825.1,396.9 833.6,416.6 853.3,419.4 856.1,396.9 853.3,368.7 856.1,354.6 844.9,346.1" fill="#467f95"/><polygon points="842.0,350.0 856.1,354.6 853.3,368.7 856.1,396.9 853.3,419.4 840.0,418.0 846.0,390.0" fill="#2b5869" opacity="0.45"/><polygon points="822.3,350.0 821.0,374.0 826.0,396.0 831.0,396.0 828.0,372.0 830.0,352.0" fill="#69a2b7" opacity="0.5"/><polygon points="859.0,357.4 864.6,346.1 881.5,346.1 887.2,363.0 887.2,391.2 881.5,413.8 878.7,425.1 859.0,425.1 856.1,396.9 857.8,374.3" fill="#467f95"/><polygon points="874.0,347.0 881.5,346.1 887.2,363.0 887.2,391.2 881.5,413.8 878.7,425.1 872.0,425.0" fill="#2b5869" opacity="0.55"/><polygon points="833.0,415.5 853.5,418.0 853.3,423.0 834.0,421.0" fill="#262a2c" opacity="0.85"/><polygon points="859.0,423.0 879.0,423.5 879.5,429.0 860.0,428.5" fill="#262a2c" opacity="0.85"/><polygon points="822.3,329.2 884.3,323.6 887.2,343.3 873.0,357.4 859.0,360.2 842.0,354.6 822.3,348.9" fill="#467f95"/><polygon points="870.0,326.0 884.3,323.6 887.2,343.3 873.0,357.4 866.0,358.0" fill="#2b5869" opacity="0.5"/><polygon points="827.9,320.7 884.3,315.1 884.3,329.2 864.6,340.5 836.4,334.8 827.9,332.0" fill="#35393b"/><polygon points="833.6,295.4 878.7,292.5 881.5,312.3 859.0,323.6 833.6,317.9" fill="#467f95"/><polygon points="862.0,296.0 878.7,292.5 881.5,312.3 862.0,321.0" fill="#2b5869" opacity="0.45"/><polygon points="834.0,296.0 850.0,295.0 848.0,318.0 834.0,316.0" fill="#69a2b7" opacity="0.45"/><polygon points="832.0,290.0 880.2,282.2 880.2,300.0 848.0,303.6 832.0,298.3" fill="#262a2c"/><polygon points="846.0,226.0 869.0,224.0 872.0,236.0 860.0,250.0 847.0,245.0" fill="#262a2c"/><polygon points="820.0,236.8 845.4,232.8 851.0,243.0 859.0,246.5 866.8,239.5 900.2,240.8 892.2,258.2 880.2,282.2 868.1,293.0 849.4,295.6 834.7,287.6 825.4,276.9 821.4,260.9" fill="#467f95" stroke="#4b8399" stroke-width="1.5" stroke-linejoin="round"/><polygon points="821.0,238.0 845.4,234.0 858.0,250.0 856.0,275.0 849.4,294.0 834.7,287.6 825.4,276.9 821.4,260.9" fill="#69a2b7" opacity="0.55"/><polygon points="880.2,282.2 892.2,258.2 900.2,240.8 885.0,250.0 870.0,275.0 868.1,293.0" fill="#2b5869" opacity="0.5"/><polygon points="713.2,242.3 720.3,240.3 730.5,239.3 740.6,238.3 747.7,239.3 752.8,238.3 771.1,237.3 783.3,238.3 791.4,237.8 801.6,238.8 822.0,238.3 822.0,260.6 806.6,254.5 791.4,255.5 781.3,253.5 771.1,250.5 760.9,248.4 746.7,249.5 740.6,250.5 733.5,252.5 723.4,258.6 720.3,257.6 726.4,252.5 730.5,248.0 723.4,244.4 714.2,243.9" fill="#467f95"/><polygon points="752.8,238.3 771.1,237.3 783.3,238.3 791.4,237.8 801.6,238.8 822.0,238.3 822.0,246.0 800.0,244.0 780.0,243.0 760.0,243.0" fill="#69a2b7" opacity="0.45"/><polygon points="781.0,238.3 785.0,238.0 785.3,255.0 781.3,253.5" fill="#262a2c" opacity="0.8"/><polygon points="742.7,238.5 747.7,239.3 747.0,249.5 742.0,250.3" fill="#262a2c" opacity="0.6"/><polygon points="890.0,241.0 900.0,244.7 916.0,243.4 943.3,248.5 945.4,267.5 900.0,267.0 889.3,265.6" fill="#467f95"/><polygon points="889.0,250.0 898.0,247.0 901.0,268.0 889.0,266.0" fill="#2b5869"/><polygon points="947.4,249.0 1001.4,257.3 1001.4,269.8 947.4,265.6" fill="#467f95"/><polygon points="942.0,249.0 946.0,249.5 946.0,267.0 942.0,267.0" fill="#262a2c"/><polygon points="1006.7,256.8 1025.4,258.0 1028.0,260.0 1052.0,263.4 1054.3,266.0 1049.5,268.8 1030.0,270.0 1022.0,272.0 1026.8,280.8 1024.0,286.0 1020.0,283.4 1009.4,273.0 1005.4,268.0" fill="#467f95"/><polygon points="1000.0,256.5 1004.0,257.0 1004.0,270.0 1000.0,270.0" fill="#262a2c"/><polygon points="837.7,197.7 844.4,183.0 855.0,179.7 865.7,183.0 873.7,192.4 877.0,204.4 875.7,215.0 868.4,225.7 859.0,228.4 848.4,232.4 843.0,231.0 841.0,221.7 837.0,205.7" fill="#5892a8" stroke="#5892a8" stroke-width="1.5" stroke-linejoin="round"/><polygon points="848.4,205.7 855.0,199.0 865.7,196.4 871.0,189.7 876.4,199.0 875.7,215.0 868.4,225.7 857.7,228.4 849.7,225.7 847.7,215.0" fill="#3d7185" stroke="#3d7185" stroke-width="1" stroke-linejoin="round"/><g fill="none" stroke="#a2a2a2" stroke-width="1.3">
<circle cx="653" cy="562.3" r="4.7" fill="#a2a2a2" stroke="none"/>
<circle cx="651.3" cy="561.8" r="1.1" fill="#c4c4c4" stroke="none"/><circle cx="654.7" cy="561.8" r="1.1" fill="#c4c4c4" stroke="none"/>
<path d="M651,578.6 A3.3,3.3 0 1 1 650,581.6"/><polygon points="649,577 652.8,577.6 650.2,580.4" fill="#a2a2a2" stroke="none"/>
<path d="M653,590 L653,598.6 M648.7,594.3 L657.3,594.3"/>
<circle cx="652.2" cy="606.4" r="2.8"/><path d="M654.2,608.4 L656.5,610.7"/>
<path d="M650.6,617 A3.3,3.3 0 1 0 655.2,617 M652.9,615.6 L652.9,619"/>
<rect x="649.3" y="629.2" width="5.8" height="5.4" fill="#a2a2a2" stroke="none"/><polygon points="655,631.7 658.2,629.6 658.2,634.4" fill="#a2a2a2" stroke="none"/>
</g></svg></div>
<div id="rp" class="abs"></div>
<div class="btn" style="top:71px;height:19px;background:#ff7300;color:#fff"><span class="bt">DOWNLOAD</span></div>
<div class="btn" style="top:93px;background:#f2f2f2;border:1px solid #e6e6e6;color:#555;line-height:17px"><span class="bt">AERO UPDATE</span></div>
<div class="btn" style="top:115px;background:#f2f2f2;border:1px solid #e6e6e6;color:#555;line-height:17px"><span class="bt">UPLOAD CHARACTER</span></div>
<div class="abs" style="left:1068px;top:138px;width:212px;height:1px;background:#efefef"></div>
<div class="btn" style="top:144.5px;background:#f2f2f2;border:1px solid #e6e6e6;color:#555;line-height:17px"><span class="bt"><svg width="8" height="8" viewBox="0 0 8 8" style="vertical-align:-1px;margin-right:1.5px"><circle cx="3.3" cy="3.3" r="2.5" fill="none" stroke="#555" stroke-width="1"/><line x1="5.1" y1="5.1" x2="7.3" y2="7.3" stroke="#555" stroke-width="1.1"/></svg>FIND ANIMATIONS</span></div>

<div id="player" class="abs"></div>
<div class="abs" style="left:650px;top:656px;width:2.5px;height:7.5px;background:#c4c4c4"></div>
<div class="abs" style="left:654.5px;top:656px;width:2.5px;height:7.5px;background:#c4c4c4"></div>
<div class="abs" style="left:665px;top:645px;width:1px;height:29px;background:#efefef"></div>
<div class="t" style="left:681px;top:656px;font-size:7px;color:#aaa;letter-spacing:0.2px">0 / 0</div>
<div class="abs" style="left:716px;top:658px;width:345px;height:4.5px;border-radius:3px;background:#ececec"></div>
<div class="abs" style="left:714px;top:656px;width:8px;height:8px;border-radius:50%;background:#bdbdbd"></div>

</body></html>
